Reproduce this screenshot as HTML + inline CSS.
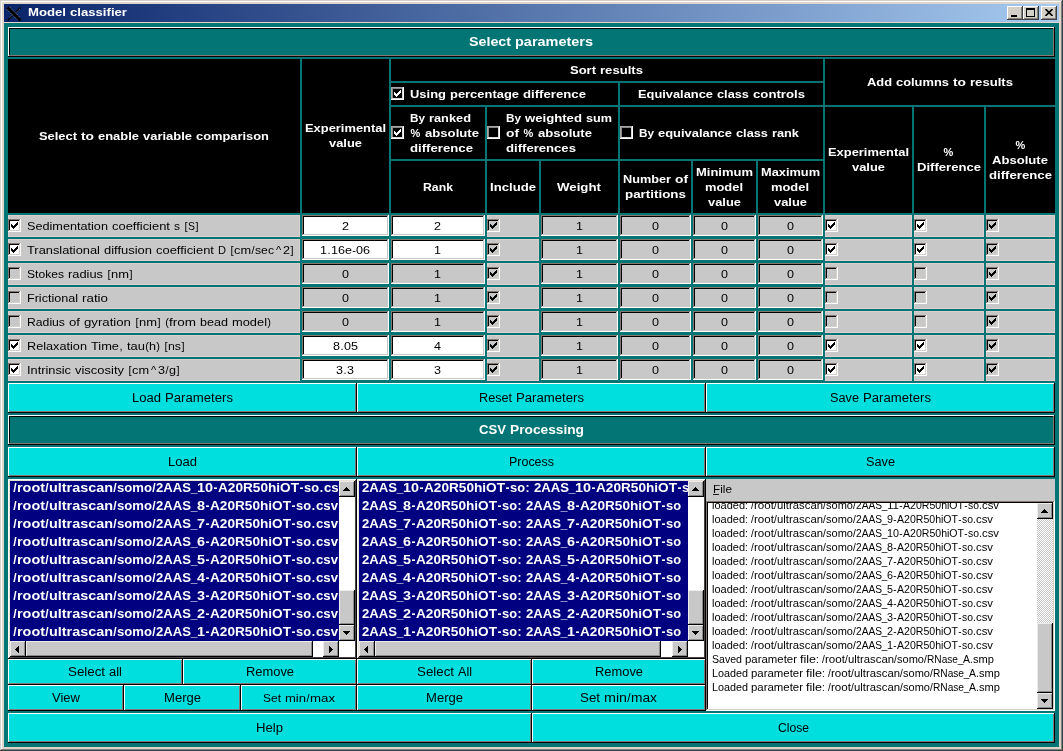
<!DOCTYPE html>
<html><head><meta charset="utf-8"><style>
html,body{margin:0;padding:0;width:1063px;height:751px;overflow:hidden;background:#d4d0c8;}
body{position:relative;font-family:"Liberation Sans",sans-serif;}
.a{position:absolute;box-sizing:border-box;}
.t{position:absolute;white-space:pre;font-family:"Liberation Sans",sans-serif;will-change:transform;}
.t span{position:absolute;top:0;transform-origin:0 0;}
</style></head><body>
<div class="a " style="left:0px;top:0px;width:1063px;height:751px;background:#404040;"></div>
<div class="a " style="left:0px;top:0px;width:1062px;height:750px;background:#d4d0c8;"></div>
<div class="a " style="left:1px;top:1px;width:1061px;height:749px;background:#808080;"></div>
<div class="a " style="left:1px;top:1px;width:1060px;height:748px;background:#fff;"></div>
<div class="a " style="left:2px;top:2px;width:1059px;height:747px;background:#ddd6cd;"></div>
<div class="a " style="left:4px;top:4px;width:1055px;height:18px;background:linear-gradient(to right,#0a246a,#a6caf0);"></div>
<div class="a " style="left:4px;top:23px;width:1055px;height:724px;background:#037575;"></div>
<svg class="a" style="left:6px;top:6px" width="16" height="16"><path d="M1.5,1.5 L14.5,14.5" stroke="#000" stroke-width="3"/><path d="M14.5,1.5 L1.5,14.5" stroke="#000" stroke-width="1.2"/><path d="M1,3.6 L11.4,14 M3.6,1 L14,11.4 M14,2.8 L9.5,7.3 M6.5,8.7 L2.8,12.4" stroke="#c8c0b0" stroke-width="0.7" stroke-dasharray="1 1.6"/></svg>
<div class="t" style="left:28px;top:7px;font-size:11px;line-height:11px;color:#fff;font-weight:bold;"><span style="left:0px;transform:scaleX(1.196)">Model</span><span style="left:42px;transform:scaleX(1.194)">classifier</span></div>
<div class="a " style="left:1007px;top:6px;width:16px;height:14px;background:#d4d0c8;box-shadow:inset -1px -1px 0 #404040,inset 1px 1px 0 #fff,inset -2px -2px 0 #808080,inset 2px 2px 0 #d4d0c8;"></div>
<div class="a " style="left:1023px;top:6px;width:16px;height:14px;background:#d4d0c8;box-shadow:inset -1px -1px 0 #404040,inset 1px 1px 0 #fff,inset -2px -2px 0 #808080,inset 2px 2px 0 #d4d0c8;"></div>
<div class="a " style="left:1041px;top:6px;width:16px;height:14px;background:#d4d0c8;box-shadow:inset -1px -1px 0 #404040,inset 1px 1px 0 #fff,inset -2px -2px 0 #808080,inset 2px 2px 0 #d4d0c8;"></div>
<div class="a " style="left:1011px;top:15px;width:6px;height:2px;background:#000;"></div>
<div class="a " style="left:1026px;top:8px;width:9px;height:9px;border:1px solid #000;border-top-width:2px;box-sizing:border-box;"></div>
<svg class="a" style="left:1045px;top:9px" width="8" height="7"><path d="M0.5,0 L7.5,7 M7.5,0 L0.5,7" stroke="#000" stroke-width="1.6"/></svg>
<div class="a " style="left:8px;top:27px;width:1047px;height:30px;background:#037575;box-shadow:inset -1px -1px 0 #000,inset 1px 1px 0 #fff,inset -2px -2px 0 #857873,inset 2px 2px 0 #000;"></div>
<div class="t" style="left:469px;top:36px;font-size:12px;line-height:12px;color:#fff;font-weight:bold;"><span style="left:0px;transform:scaleX(1.188)">Select</span><span style="left:46px;transform:scaleX(1.206)">parameters</span></div>
<div class="a " style="left:8px;top:59px;width:292px;height:154px;background:#000;"></div>
<div class="t" style="left:39px;top:131px;font-size:11px;line-height:11px;color:#fff;font-weight:bold;"><span style="left:0px;transform:scaleX(1.171)">Select</span><span style="left:42px;transform:scaleX(1.253)">to</span><span style="left:59px;transform:scaleX(1.176)">enable</span><span style="left:104px;transform:scaleX(1.177)">variable</span><span style="left:157px;transform:scaleX(1.170)">comparison</span></div>
<div class="a " style="left:302px;top:59px;width:87px;height:154px;background:#000;"></div>
<div class="t" style="left:305px;top:123px;font-size:11px;line-height:11px;color:#fff;font-weight:bold;"><span style="left:0px;transform:scaleX(1.172)">Experimental</span></div>
<div class="t" style="left:329px;top:138px;font-size:11px;line-height:11px;color:#fff;font-weight:bold;"><span style="left:0px;transform:scaleX(1.172)">value</span></div>
<div class="a " style="left:391px;top:59px;width:432px;height:22px;background:#000;"></div>
<div class="t" style="left:570px;top:65px;font-size:11px;line-height:11px;color:#fff;font-weight:bold;"><span style="left:0px;transform:scaleX(1.182)">Sort</span><span style="left:30px;transform:scaleX(1.191)">results</span></div>
<div class="a " style="left:391px;top:83px;width:227px;height:22px;background:#000;"></div>
<div class="a " style="left:391px;top:87px;width:13px;height:13px;background:#000;box-shadow:inset -1px -1px 0 #fff,inset 1px 1px 0 #a8a8a8,inset -2px -2px 0 #d8d8d8,inset 2px 2px 0 #888888;"></div>
<svg class="a" style="left:391px;top:87px" width="13" height="13" fill="#fff" shape-rendering="crispEdges"><rect x="3" y="5" width="1" height="3"/><rect x="4" y="6" width="1" height="3"/><rect x="5" y="7" width="1" height="3"/><rect x="6" y="6" width="1" height="3"/><rect x="7" y="5" width="1" height="3"/><rect x="8" y="4" width="1" height="3"/><rect x="9" y="3" width="1" height="3"/></svg>
<div class="t" style="left:410px;top:89px;font-size:11px;line-height:11px;color:#fff;font-weight:bold;"><span style="left:0px;transform:scaleX(1.178)">Using</span><span style="left:40px;transform:scaleX(1.175)">percentage</span><span style="left:113px;transform:scaleX(1.198)">difference</span></div>
<div class="a " style="left:620px;top:83px;width:203px;height:22px;background:#000;"></div>
<div class="t" style="left:638px;top:89px;font-size:11px;line-height:11px;color:#fff;font-weight:bold;"><span style="left:0px;transform:scaleX(1.167)">Equivalance</span><span style="left:79px;transform:scaleX(1.161)">class</span><span style="left:115px;transform:scaleX(1.198)">controls</span></div>
<div class="a " style="left:391px;top:107px;width:94px;height:52px;background:#000;"></div>
<div class="a " style="left:391px;top:126px;width:13px;height:13px;background:#000;box-shadow:inset -1px -1px 0 #fff,inset 1px 1px 0 #a8a8a8,inset -2px -2px 0 #d8d8d8,inset 2px 2px 0 #888888;"></div>
<svg class="a" style="left:391px;top:126px" width="13" height="13" fill="#fff" shape-rendering="crispEdges"><rect x="3" y="5" width="1" height="3"/><rect x="4" y="6" width="1" height="3"/><rect x="5" y="7" width="1" height="3"/><rect x="6" y="6" width="1" height="3"/><rect x="7" y="5" width="1" height="3"/><rect x="8" y="4" width="1" height="3"/><rect x="9" y="3" width="1" height="3"/></svg>
<div class="t" style="left:410px;top:113px;font-size:11px;line-height:11px;color:#fff;font-weight:bold;"><span style="left:0px;transform:scaleX(1.067)">By</span><span style="left:19px;transform:scaleX(1.164)">ranked</span></div>
<div class="t" style="left:410px;top:128px;font-size:11px;line-height:11px;color:#fff;font-weight:bold;"><span style="left:0.61px">%</span><span style="left:15px;transform:scaleX(1.193)">absolute</span></div>
<div class="t" style="left:410px;top:143px;font-size:11px;line-height:11px;color:#fff;font-weight:bold;"><span style="left:0px;transform:scaleX(1.198)">difference</span></div>
<div class="a " style="left:487px;top:107px;width:131px;height:52px;background:#000;"></div>
<div class="a " style="left:487px;top:126px;width:13px;height:13px;background:#000;box-shadow:inset -1px -1px 0 #fff,inset 1px 1px 0 #a8a8a8,inset -2px -2px 0 #d8d8d8,inset 2px 2px 0 #888888;"></div>
<div class="t" style="left:506px;top:113px;font-size:11px;line-height:11px;color:#fff;font-weight:bold;"><span style="left:0px;transform:scaleX(1.067)">By</span><span style="left:19px;transform:scaleX(1.195)">weighted</span><span style="left:80px;transform:scaleX(1.149)">sum</span></div>
<div class="t" style="left:506px;top:128px;font-size:11px;line-height:11px;color:#fff;font-weight:bold;"><span style="left:0px;transform:scaleX(1.253)">of</span><span style="left:17.61px">%</span><span style="left:32px;transform:scaleX(1.193)">absolute</span></div>
<div class="t" style="left:506px;top:143px;font-size:11px;line-height:11px;color:#fff;font-weight:bold;"><span style="left:0px;transform:scaleX(1.192)">differences</span></div>
<div class="a " style="left:620px;top:107px;width:203px;height:52px;background:#000;"></div>
<div class="a " style="left:620px;top:126px;width:13px;height:13px;background:#000;box-shadow:inset -1px -1px 0 #fff,inset 1px 1px 0 #a8a8a8,inset -2px -2px 0 #d8d8d8,inset 2px 2px 0 #888888;"></div>
<div class="t" style="left:639px;top:128px;font-size:11px;line-height:11px;color:#fff;font-weight:bold;"><span style="left:0px;transform:scaleX(1.067)">By</span><span style="left:19px;transform:scaleX(1.174)">equivalance</span><span style="left:97px;transform:scaleX(1.161)">class</span><span style="left:133px;transform:scaleX(1.161)">rank</span></div>
<div class="a " style="left:391px;top:161px;width:94px;height:52px;background:#000;"></div>
<div class="t" style="left:423px;top:182px;font-size:11px;line-height:11px;color:#fff;font-weight:bold;"><span style="left:0px;transform:scaleX(1.115)">Rank</span></div>
<div class="a " style="left:487px;top:161px;width:52px;height:52px;background:#000;"></div>
<div class="t" style="left:490px;top:182px;font-size:11px;line-height:11px;color:#fff;font-weight:bold;"><span style="left:0px;transform:scaleX(1.194)">Include</span></div>
<div class="a " style="left:541px;top:161px;width:77px;height:52px;background:#000;"></div>
<div class="t" style="left:557px;top:182px;font-size:11px;line-height:11px;color:#fff;font-weight:bold;"><span style="left:0px;transform:scaleX(1.207)">Weight</span></div>
<div class="a " style="left:620px;top:161px;width:71px;height:52px;background:#000;"></div>
<div class="t" style="left:623px;top:174px;font-size:11px;line-height:11px;color:#fff;font-weight:bold;"><span style="left:0px;transform:scaleX(1.155)">Number</span><span style="left:52px;transform:scaleX(1.253)">of</span></div>
<div class="t" style="left:625px;top:189px;font-size:11px;line-height:11px;color:#fff;font-weight:bold;"><span style="left:0px;transform:scaleX(1.217)">partitions</span></div>
<div class="a " style="left:693px;top:161px;width:63px;height:52px;background:#000;"></div>
<div class="t" style="left:696px;top:167px;font-size:11px;line-height:11px;color:#fff;font-weight:bold;"><span style="left:0px;transform:scaleX(1.181)">Minimum</span></div>
<div class="t" style="left:705px;top:182px;font-size:11px;line-height:11px;color:#fff;font-weight:bold;"><span style="left:0px;transform:scaleX(1.173)">model</span></div>
<div class="t" style="left:708px;top:197px;font-size:11px;line-height:11px;color:#fff;font-weight:bold;"><span style="left:0px;transform:scaleX(1.172)">value</span></div>
<div class="a " style="left:758px;top:161px;width:65px;height:52px;background:#000;"></div>
<div class="t" style="left:761px;top:167px;font-size:11px;line-height:11px;color:#fff;font-weight:bold;"><span style="left:0px;transform:scaleX(1.163)">Maximum</span></div>
<div class="t" style="left:771px;top:182px;font-size:11px;line-height:11px;color:#fff;font-weight:bold;"><span style="left:0px;transform:scaleX(1.173)">model</span></div>
<div class="t" style="left:774px;top:197px;font-size:11px;line-height:11px;color:#fff;font-weight:bold;"><span style="left:0px;transform:scaleX(1.172)">value</span></div>
<div class="a " style="left:825px;top:59px;width:230px;height:46px;background:#000;"></div>
<div class="t" style="left:867px;top:77px;font-size:11px;line-height:11px;color:#fff;font-weight:bold;"><span style="left:0px;transform:scaleX(1.170)">Add</span><span style="left:29px;transform:scaleX(1.171)">columns</span><span style="left:86px;transform:scaleX(1.253)">to</span><span style="left:103px;transform:scaleX(1.191)">results</span></div>
<div class="a " style="left:825px;top:107px;width:87px;height:106px;background:#000;"></div>
<div class="t" style="left:828px;top:147px;font-size:11px;line-height:11px;color:#fff;font-weight:bold;"><span style="left:0px;transform:scaleX(1.172)">Experimental</span></div>
<div class="t" style="left:852px;top:162px;font-size:11px;line-height:11px;color:#fff;font-weight:bold;"><span style="left:0px;transform:scaleX(1.172)">value</span></div>
<div class="a " style="left:914px;top:107px;width:70px;height:106px;background:#000;"></div>
<div class="t" style="left:943px;top:147px;font-size:11px;line-height:11px;color:#fff;font-weight:bold;"><span style="left:0.61px">%</span></div>
<div class="t" style="left:917px;top:162px;font-size:11px;line-height:11px;color:#fff;font-weight:bold;"><span style="left:0px;transform:scaleX(1.189)">Difference</span></div>
<div class="a " style="left:986px;top:107px;width:69px;height:106px;background:#000;"></div>
<div class="t" style="left:1015px;top:140px;font-size:11px;line-height:11px;color:#fff;font-weight:bold;"><span style="left:0.61px">%</span></div>
<div class="t" style="left:992px;top:155px;font-size:11px;line-height:11px;color:#fff;font-weight:bold;"><span style="left:0px;transform:scaleX(1.190)">Absolute</span></div>
<div class="t" style="left:989px;top:170px;font-size:11px;line-height:11px;color:#fff;font-weight:bold;"><span style="left:0px;transform:scaleX(1.198)">difference</span></div>
<div class="a " style="left:8px;top:215px;width:292px;height:22px;background:#c8c8c8;border:1px solid #dccfcf;box-sizing:border-box;"></div>
<div class="a " style="left:8px;top:219px;width:13px;height:13px;background:#fff;box-shadow:inset -1px -1px 0 #fff,inset 1px 1px 0 #857873,inset -2px -2px 0 #d4d0c8,inset 2px 2px 0 #000;"></div>
<svg class="a" style="left:8px;top:219px" width="13" height="13" fill="#000" shape-rendering="crispEdges"><rect x="3" y="5" width="1" height="3"/><rect x="4" y="6" width="1" height="3"/><rect x="5" y="7" width="1" height="3"/><rect x="6" y="6" width="1" height="3"/><rect x="7" y="5" width="1" height="3"/><rect x="8" y="4" width="1" height="3"/><rect x="9" y="3" width="1" height="3"/></svg>
<div class="t" style="left:27px;top:221px;font-size:11px;line-height:11px;color:#000;"><span style="left:0px;transform:scaleX(1.151)">Sedimentation</span><span style="left:85px;transform:scaleX(1.175)">coefficient</span><span style="left:147px;transform:scaleX(1.091)">s</span><span style="left:157.47px">[</span><span style="left:161px;transform:scaleX(0.953)">S</span><span style="left:168.47px">]</span></div>
<div class="a " style="left:302px;top:215px;width:87px;height:21px;background:#fff;box-shadow:inset -1px -1px 0 #fff,inset 1px 1px 0 #857873,inset -2px -2px 0 #c8c8c8,inset 2px 2px 0 #000;"></div>
<div class="t" style="left:342px;top:221px;font-size:11px;line-height:11px;color:#000;"><span style="left:0px;transform:scaleX(1.143)">2</span></div>
<div class="a " style="left:391px;top:215px;width:94px;height:21px;background:#fff;box-shadow:inset -1px -1px 0 #fff,inset 1px 1px 0 #857873,inset -2px -2px 0 #c8c8c8,inset 2px 2px 0 #000;"></div>
<div class="t" style="left:434px;top:221px;font-size:11px;line-height:11px;color:#000;"><span style="left:0px;transform:scaleX(1.143)">2</span></div>
<div class="a " style="left:487px;top:215px;width:52px;height:22px;background:#c8c8c8;border:1px solid #dccfcf;box-sizing:border-box;"></div>
<div class="a " style="left:487px;top:219px;width:13px;height:13px;background:#c8c8c8;box-shadow:inset -1px -1px 0 #fff,inset 1px 1px 0 #857873,inset -2px -2px 0 #d4d0c8,inset 2px 2px 0 #000;"></div>
<svg class="a" style="left:487px;top:219px" width="13" height="13" fill="#000" shape-rendering="crispEdges"><rect x="3" y="5" width="1" height="3"/><rect x="4" y="6" width="1" height="3"/><rect x="5" y="7" width="1" height="3"/><rect x="6" y="6" width="1" height="3"/><rect x="7" y="5" width="1" height="3"/><rect x="8" y="4" width="1" height="3"/><rect x="9" y="3" width="1" height="3"/></svg>
<div class="a " style="left:541px;top:215px;width:77px;height:21px;background:#c8c8c8;box-shadow:inset -1px -1px 0 #fff,inset 1px 1px 0 #857873,inset -2px -2px 0 #c8c8c8,inset 2px 2px 0 #000;"></div>
<div class="t" style="left:576px;top:221px;font-size:11px;line-height:11px;color:#000;"><span style="left:0px;transform:scaleX(1.143)">1</span></div>
<div class="a " style="left:620px;top:215px;width:71px;height:21px;background:#c8c8c8;box-shadow:inset -1px -1px 0 #fff,inset 1px 1px 0 #857873,inset -2px -2px 0 #c8c8c8,inset 2px 2px 0 #000;"></div>
<div class="t" style="left:652px;top:221px;font-size:11px;line-height:11px;color:#000;"><span style="left:0px;transform:scaleX(1.143)">0</span></div>
<div class="a " style="left:693px;top:215px;width:63px;height:21px;background:#c8c8c8;box-shadow:inset -1px -1px 0 #fff,inset 1px 1px 0 #857873,inset -2px -2px 0 #c8c8c8,inset 2px 2px 0 #000;"></div>
<div class="t" style="left:721px;top:221px;font-size:11px;line-height:11px;color:#000;"><span style="left:0px;transform:scaleX(1.143)">0</span></div>
<div class="a " style="left:758px;top:215px;width:65px;height:21px;background:#c8c8c8;box-shadow:inset -1px -1px 0 #fff,inset 1px 1px 0 #857873,inset -2px -2px 0 #c8c8c8,inset 2px 2px 0 #000;"></div>
<div class="t" style="left:787px;top:221px;font-size:11px;line-height:11px;color:#000;"><span style="left:0px;transform:scaleX(1.143)">0</span></div>
<div class="a " style="left:825px;top:215px;width:87px;height:22px;background:#c8c8c8;border:1px solid #dccfcf;box-sizing:border-box;"></div>
<div class="a " style="left:825px;top:219px;width:13px;height:13px;background:#fff;box-shadow:inset -1px -1px 0 #fff,inset 1px 1px 0 #857873,inset -2px -2px 0 #d4d0c8,inset 2px 2px 0 #000;"></div>
<svg class="a" style="left:825px;top:219px" width="13" height="13" fill="#000" shape-rendering="crispEdges"><rect x="3" y="5" width="1" height="3"/><rect x="4" y="6" width="1" height="3"/><rect x="5" y="7" width="1" height="3"/><rect x="6" y="6" width="1" height="3"/><rect x="7" y="5" width="1" height="3"/><rect x="8" y="4" width="1" height="3"/><rect x="9" y="3" width="1" height="3"/></svg>
<div class="a " style="left:914px;top:215px;width:70px;height:22px;background:#c8c8c8;border:1px solid #dccfcf;box-sizing:border-box;"></div>
<div class="a " style="left:914px;top:219px;width:13px;height:13px;background:#fff;box-shadow:inset -1px -1px 0 #fff,inset 1px 1px 0 #857873,inset -2px -2px 0 #d4d0c8,inset 2px 2px 0 #000;"></div>
<svg class="a" style="left:914px;top:219px" width="13" height="13" fill="#000" shape-rendering="crispEdges"><rect x="3" y="5" width="1" height="3"/><rect x="4" y="6" width="1" height="3"/><rect x="5" y="7" width="1" height="3"/><rect x="6" y="6" width="1" height="3"/><rect x="7" y="5" width="1" height="3"/><rect x="8" y="4" width="1" height="3"/><rect x="9" y="3" width="1" height="3"/></svg>
<div class="a " style="left:986px;top:215px;width:69px;height:22px;background:#c8c8c8;border:1px solid #dccfcf;box-sizing:border-box;"></div>
<div class="a " style="left:986px;top:219px;width:13px;height:13px;background:#c8c8c8;box-shadow:inset -1px -1px 0 #fff,inset 1px 1px 0 #857873,inset -2px -2px 0 #d4d0c8,inset 2px 2px 0 #000;"></div>
<svg class="a" style="left:986px;top:219px" width="13" height="13" fill="#000" shape-rendering="crispEdges"><rect x="3" y="5" width="1" height="3"/><rect x="4" y="6" width="1" height="3"/><rect x="5" y="7" width="1" height="3"/><rect x="6" y="6" width="1" height="3"/><rect x="7" y="5" width="1" height="3"/><rect x="8" y="4" width="1" height="3"/><rect x="9" y="3" width="1" height="3"/></svg>
<div class="a " style="left:8px;top:239px;width:292px;height:22px;background:#c8c8c8;border:1px solid #dccfcf;box-sizing:border-box;"></div>
<div class="a " style="left:8px;top:243px;width:13px;height:13px;background:#fff;box-shadow:inset -1px -1px 0 #fff,inset 1px 1px 0 #857873,inset -2px -2px 0 #d4d0c8,inset 2px 2px 0 #000;"></div>
<svg class="a" style="left:8px;top:243px" width="13" height="13" fill="#000" shape-rendering="crispEdges"><rect x="3" y="5" width="1" height="3"/><rect x="4" y="6" width="1" height="3"/><rect x="5" y="7" width="1" height="3"/><rect x="6" y="6" width="1" height="3"/><rect x="7" y="5" width="1" height="3"/><rect x="8" y="4" width="1" height="3"/><rect x="9" y="3" width="1" height="3"/></svg>
<div class="t" style="left:27px;top:245px;font-size:11px;line-height:11px;color:#000;"><span style="left:0px;transform:scaleX(1.166)">Translational</span><span style="left:77px;transform:scaleX(1.177)">diffusion</span><span style="left:129px;transform:scaleX(1.175)">coefficient</span><span style="left:191px;transform:scaleX(1.008)">D</span><span style="left:203.47px">[</span><span style="left:207px;transform:scaleX(1.160)">cm</span><span style="left:224.47px">/</span><span style="left:228px;transform:scaleX(1.109)">sec</span><span style="left:248.92px">^</span><span style="left:256px;transform:scaleX(1.143)">2</span><span style="left:263.47px">]</span></div>
<div class="a " style="left:302px;top:239px;width:87px;height:21px;background:#fff;box-shadow:inset -1px -1px 0 #fff,inset 1px 1px 0 #857873,inset -2px -2px 0 #c8c8c8,inset 2px 2px 0 #000;"></div>
<div class="t" style="left:320px;top:245px;font-size:11px;line-height:11px;color:#000;"><span style="left:0px;transform:scaleX(1.143)">1</span><span style="left:7.47px">.</span><span style="left:11px;transform:scaleX(1.143)">16e</span><span style="left:32.17px">-</span><span style="left:36px;transform:scaleX(1.143)">06</span></div>
<div class="a " style="left:391px;top:239px;width:94px;height:21px;background:#fff;box-shadow:inset -1px -1px 0 #fff,inset 1px 1px 0 #857873,inset -2px -2px 0 #c8c8c8,inset 2px 2px 0 #000;"></div>
<div class="t" style="left:434px;top:245px;font-size:11px;line-height:11px;color:#000;"><span style="left:0px;transform:scaleX(1.143)">1</span></div>
<div class="a " style="left:487px;top:239px;width:52px;height:22px;background:#c8c8c8;border:1px solid #dccfcf;box-sizing:border-box;"></div>
<div class="a " style="left:487px;top:243px;width:13px;height:13px;background:#c8c8c8;box-shadow:inset -1px -1px 0 #fff,inset 1px 1px 0 #857873,inset -2px -2px 0 #d4d0c8,inset 2px 2px 0 #000;"></div>
<svg class="a" style="left:487px;top:243px" width="13" height="13" fill="#000" shape-rendering="crispEdges"><rect x="3" y="5" width="1" height="3"/><rect x="4" y="6" width="1" height="3"/><rect x="5" y="7" width="1" height="3"/><rect x="6" y="6" width="1" height="3"/><rect x="7" y="5" width="1" height="3"/><rect x="8" y="4" width="1" height="3"/><rect x="9" y="3" width="1" height="3"/></svg>
<div class="a " style="left:541px;top:239px;width:77px;height:21px;background:#c8c8c8;box-shadow:inset -1px -1px 0 #fff,inset 1px 1px 0 #857873,inset -2px -2px 0 #c8c8c8,inset 2px 2px 0 #000;"></div>
<div class="t" style="left:576px;top:245px;font-size:11px;line-height:11px;color:#000;"><span style="left:0px;transform:scaleX(1.143)">1</span></div>
<div class="a " style="left:620px;top:239px;width:71px;height:21px;background:#c8c8c8;box-shadow:inset -1px -1px 0 #fff,inset 1px 1px 0 #857873,inset -2px -2px 0 #c8c8c8,inset 2px 2px 0 #000;"></div>
<div class="t" style="left:652px;top:245px;font-size:11px;line-height:11px;color:#000;"><span style="left:0px;transform:scaleX(1.143)">0</span></div>
<div class="a " style="left:693px;top:239px;width:63px;height:21px;background:#c8c8c8;box-shadow:inset -1px -1px 0 #fff,inset 1px 1px 0 #857873,inset -2px -2px 0 #c8c8c8,inset 2px 2px 0 #000;"></div>
<div class="t" style="left:721px;top:245px;font-size:11px;line-height:11px;color:#000;"><span style="left:0px;transform:scaleX(1.143)">0</span></div>
<div class="a " style="left:758px;top:239px;width:65px;height:21px;background:#c8c8c8;box-shadow:inset -1px -1px 0 #fff,inset 1px 1px 0 #857873,inset -2px -2px 0 #c8c8c8,inset 2px 2px 0 #000;"></div>
<div class="t" style="left:787px;top:245px;font-size:11px;line-height:11px;color:#000;"><span style="left:0px;transform:scaleX(1.143)">0</span></div>
<div class="a " style="left:825px;top:239px;width:87px;height:22px;background:#c8c8c8;border:1px solid #dccfcf;box-sizing:border-box;"></div>
<div class="a " style="left:825px;top:243px;width:13px;height:13px;background:#fff;box-shadow:inset -1px -1px 0 #fff,inset 1px 1px 0 #857873,inset -2px -2px 0 #d4d0c8,inset 2px 2px 0 #000;"></div>
<svg class="a" style="left:825px;top:243px" width="13" height="13" fill="#000" shape-rendering="crispEdges"><rect x="3" y="5" width="1" height="3"/><rect x="4" y="6" width="1" height="3"/><rect x="5" y="7" width="1" height="3"/><rect x="6" y="6" width="1" height="3"/><rect x="7" y="5" width="1" height="3"/><rect x="8" y="4" width="1" height="3"/><rect x="9" y="3" width="1" height="3"/></svg>
<div class="a " style="left:914px;top:239px;width:70px;height:22px;background:#c8c8c8;border:1px solid #dccfcf;box-sizing:border-box;"></div>
<div class="a " style="left:914px;top:243px;width:13px;height:13px;background:#fff;box-shadow:inset -1px -1px 0 #fff,inset 1px 1px 0 #857873,inset -2px -2px 0 #d4d0c8,inset 2px 2px 0 #000;"></div>
<svg class="a" style="left:914px;top:243px" width="13" height="13" fill="#000" shape-rendering="crispEdges"><rect x="3" y="5" width="1" height="3"/><rect x="4" y="6" width="1" height="3"/><rect x="5" y="7" width="1" height="3"/><rect x="6" y="6" width="1" height="3"/><rect x="7" y="5" width="1" height="3"/><rect x="8" y="4" width="1" height="3"/><rect x="9" y="3" width="1" height="3"/></svg>
<div class="a " style="left:986px;top:239px;width:69px;height:22px;background:#c8c8c8;border:1px solid #dccfcf;box-sizing:border-box;"></div>
<div class="a " style="left:986px;top:243px;width:13px;height:13px;background:#c8c8c8;box-shadow:inset -1px -1px 0 #fff,inset 1px 1px 0 #857873,inset -2px -2px 0 #d4d0c8,inset 2px 2px 0 #000;"></div>
<svg class="a" style="left:986px;top:243px" width="13" height="13" fill="#000" shape-rendering="crispEdges"><rect x="3" y="5" width="1" height="3"/><rect x="4" y="6" width="1" height="3"/><rect x="5" y="7" width="1" height="3"/><rect x="6" y="6" width="1" height="3"/><rect x="7" y="5" width="1" height="3"/><rect x="8" y="4" width="1" height="3"/><rect x="9" y="3" width="1" height="3"/></svg>
<div class="a " style="left:8px;top:263px;width:292px;height:22px;background:#c8c8c8;border:1px solid #dccfcf;box-sizing:border-box;"></div>
<div class="a " style="left:8px;top:267px;width:13px;height:13px;background:#c8c8c8;box-shadow:inset -1px -1px 0 #fff,inset 1px 1px 0 #857873,inset -2px -2px 0 #d4d0c8,inset 2px 2px 0 #000;"></div>
<div class="t" style="left:27px;top:269px;font-size:11px;line-height:11px;color:#000;"><span style="left:0px;transform:scaleX(1.099)">Stokes</span><span style="left:41px;transform:scaleX(1.168)">radius</span><span style="left:80.47px">[</span><span style="left:84px;transform:scaleX(1.178)">nm</span><span style="left:102.47px">]</span></div>
<div class="a " style="left:302px;top:263px;width:87px;height:21px;background:#c8c8c8;box-shadow:inset -1px -1px 0 #fff,inset 1px 1px 0 #857873,inset -2px -2px 0 #c8c8c8,inset 2px 2px 0 #000;"></div>
<div class="t" style="left:342px;top:269px;font-size:11px;line-height:11px;color:#000;"><span style="left:0px;transform:scaleX(1.143)">0</span></div>
<div class="a " style="left:391px;top:263px;width:94px;height:21px;background:#c8c8c8;box-shadow:inset -1px -1px 0 #fff,inset 1px 1px 0 #857873,inset -2px -2px 0 #c8c8c8,inset 2px 2px 0 #000;"></div>
<div class="t" style="left:434px;top:269px;font-size:11px;line-height:11px;color:#000;"><span style="left:0px;transform:scaleX(1.143)">1</span></div>
<div class="a " style="left:487px;top:263px;width:52px;height:22px;background:#c8c8c8;border:1px solid #dccfcf;box-sizing:border-box;"></div>
<div class="a " style="left:487px;top:267px;width:13px;height:13px;background:#c8c8c8;box-shadow:inset -1px -1px 0 #fff,inset 1px 1px 0 #857873,inset -2px -2px 0 #d4d0c8,inset 2px 2px 0 #000;"></div>
<svg class="a" style="left:487px;top:267px" width="13" height="13" fill="#000" shape-rendering="crispEdges"><rect x="3" y="5" width="1" height="3"/><rect x="4" y="6" width="1" height="3"/><rect x="5" y="7" width="1" height="3"/><rect x="6" y="6" width="1" height="3"/><rect x="7" y="5" width="1" height="3"/><rect x="8" y="4" width="1" height="3"/><rect x="9" y="3" width="1" height="3"/></svg>
<div class="a " style="left:541px;top:263px;width:77px;height:21px;background:#c8c8c8;box-shadow:inset -1px -1px 0 #fff,inset 1px 1px 0 #857873,inset -2px -2px 0 #c8c8c8,inset 2px 2px 0 #000;"></div>
<div class="t" style="left:576px;top:269px;font-size:11px;line-height:11px;color:#000;"><span style="left:0px;transform:scaleX(1.143)">1</span></div>
<div class="a " style="left:620px;top:263px;width:71px;height:21px;background:#c8c8c8;box-shadow:inset -1px -1px 0 #fff,inset 1px 1px 0 #857873,inset -2px -2px 0 #c8c8c8,inset 2px 2px 0 #000;"></div>
<div class="t" style="left:652px;top:269px;font-size:11px;line-height:11px;color:#000;"><span style="left:0px;transform:scaleX(1.143)">0</span></div>
<div class="a " style="left:693px;top:263px;width:63px;height:21px;background:#c8c8c8;box-shadow:inset -1px -1px 0 #fff,inset 1px 1px 0 #857873,inset -2px -2px 0 #c8c8c8,inset 2px 2px 0 #000;"></div>
<div class="t" style="left:721px;top:269px;font-size:11px;line-height:11px;color:#000;"><span style="left:0px;transform:scaleX(1.143)">0</span></div>
<div class="a " style="left:758px;top:263px;width:65px;height:21px;background:#c8c8c8;box-shadow:inset -1px -1px 0 #fff,inset 1px 1px 0 #857873,inset -2px -2px 0 #c8c8c8,inset 2px 2px 0 #000;"></div>
<div class="t" style="left:787px;top:269px;font-size:11px;line-height:11px;color:#000;"><span style="left:0px;transform:scaleX(1.143)">0</span></div>
<div class="a " style="left:825px;top:263px;width:87px;height:22px;background:#c8c8c8;border:1px solid #dccfcf;box-sizing:border-box;"></div>
<div class="a " style="left:825px;top:267px;width:13px;height:13px;background:#c8c8c8;box-shadow:inset -1px -1px 0 #fff,inset 1px 1px 0 #857873,inset -2px -2px 0 #d4d0c8,inset 2px 2px 0 #000;"></div>
<div class="a " style="left:914px;top:263px;width:70px;height:22px;background:#c8c8c8;border:1px solid #dccfcf;box-sizing:border-box;"></div>
<div class="a " style="left:914px;top:267px;width:13px;height:13px;background:#c8c8c8;box-shadow:inset -1px -1px 0 #fff,inset 1px 1px 0 #857873,inset -2px -2px 0 #d4d0c8,inset 2px 2px 0 #000;"></div>
<div class="a " style="left:986px;top:263px;width:69px;height:22px;background:#c8c8c8;border:1px solid #dccfcf;box-sizing:border-box;"></div>
<div class="a " style="left:986px;top:267px;width:13px;height:13px;background:#c8c8c8;box-shadow:inset -1px -1px 0 #fff,inset 1px 1px 0 #857873,inset -2px -2px 0 #d4d0c8,inset 2px 2px 0 #000;"></div>
<svg class="a" style="left:986px;top:267px" width="13" height="13" fill="#000" shape-rendering="crispEdges"><rect x="3" y="5" width="1" height="3"/><rect x="4" y="6" width="1" height="3"/><rect x="5" y="7" width="1" height="3"/><rect x="6" y="6" width="1" height="3"/><rect x="7" y="5" width="1" height="3"/><rect x="8" y="4" width="1" height="3"/><rect x="9" y="3" width="1" height="3"/></svg>
<div class="a " style="left:8px;top:287px;width:292px;height:22px;background:#c8c8c8;border:1px solid #dccfcf;box-sizing:border-box;"></div>
<div class="a " style="left:8px;top:291px;width:13px;height:13px;background:#c8c8c8;box-shadow:inset -1px -1px 0 #fff,inset 1px 1px 0 #857873,inset -2px -2px 0 #d4d0c8,inset 2px 2px 0 #000;"></div>
<div class="t" style="left:27px;top:293px;font-size:11px;line-height:11px;color:#000;"><span style="left:0px;transform:scaleX(1.143)">Frictional</span><span style="left:55px;transform:scaleX(1.215)">ratio</span></div>
<div class="a " style="left:302px;top:287px;width:87px;height:21px;background:#c8c8c8;box-shadow:inset -1px -1px 0 #fff,inset 1px 1px 0 #857873,inset -2px -2px 0 #c8c8c8,inset 2px 2px 0 #000;"></div>
<div class="t" style="left:342px;top:293px;font-size:11px;line-height:11px;color:#000;"><span style="left:0px;transform:scaleX(1.143)">0</span></div>
<div class="a " style="left:391px;top:287px;width:94px;height:21px;background:#c8c8c8;box-shadow:inset -1px -1px 0 #fff,inset 1px 1px 0 #857873,inset -2px -2px 0 #c8c8c8,inset 2px 2px 0 #000;"></div>
<div class="t" style="left:434px;top:293px;font-size:11px;line-height:11px;color:#000;"><span style="left:0px;transform:scaleX(1.143)">1</span></div>
<div class="a " style="left:487px;top:287px;width:52px;height:22px;background:#c8c8c8;border:1px solid #dccfcf;box-sizing:border-box;"></div>
<div class="a " style="left:487px;top:291px;width:13px;height:13px;background:#c8c8c8;box-shadow:inset -1px -1px 0 #fff,inset 1px 1px 0 #857873,inset -2px -2px 0 #d4d0c8,inset 2px 2px 0 #000;"></div>
<svg class="a" style="left:487px;top:291px" width="13" height="13" fill="#000" shape-rendering="crispEdges"><rect x="3" y="5" width="1" height="3"/><rect x="4" y="6" width="1" height="3"/><rect x="5" y="7" width="1" height="3"/><rect x="6" y="6" width="1" height="3"/><rect x="7" y="5" width="1" height="3"/><rect x="8" y="4" width="1" height="3"/><rect x="9" y="3" width="1" height="3"/></svg>
<div class="a " style="left:541px;top:287px;width:77px;height:21px;background:#c8c8c8;box-shadow:inset -1px -1px 0 #fff,inset 1px 1px 0 #857873,inset -2px -2px 0 #c8c8c8,inset 2px 2px 0 #000;"></div>
<div class="t" style="left:576px;top:293px;font-size:11px;line-height:11px;color:#000;"><span style="left:0px;transform:scaleX(1.143)">1</span></div>
<div class="a " style="left:620px;top:287px;width:71px;height:21px;background:#c8c8c8;box-shadow:inset -1px -1px 0 #fff,inset 1px 1px 0 #857873,inset -2px -2px 0 #c8c8c8,inset 2px 2px 0 #000;"></div>
<div class="t" style="left:652px;top:293px;font-size:11px;line-height:11px;color:#000;"><span style="left:0px;transform:scaleX(1.143)">0</span></div>
<div class="a " style="left:693px;top:287px;width:63px;height:21px;background:#c8c8c8;box-shadow:inset -1px -1px 0 #fff,inset 1px 1px 0 #857873,inset -2px -2px 0 #c8c8c8,inset 2px 2px 0 #000;"></div>
<div class="t" style="left:721px;top:293px;font-size:11px;line-height:11px;color:#000;"><span style="left:0px;transform:scaleX(1.143)">0</span></div>
<div class="a " style="left:758px;top:287px;width:65px;height:21px;background:#c8c8c8;box-shadow:inset -1px -1px 0 #fff,inset 1px 1px 0 #857873,inset -2px -2px 0 #c8c8c8,inset 2px 2px 0 #000;"></div>
<div class="t" style="left:787px;top:293px;font-size:11px;line-height:11px;color:#000;"><span style="left:0px;transform:scaleX(1.143)">0</span></div>
<div class="a " style="left:825px;top:287px;width:87px;height:22px;background:#c8c8c8;border:1px solid #dccfcf;box-sizing:border-box;"></div>
<div class="a " style="left:825px;top:291px;width:13px;height:13px;background:#c8c8c8;box-shadow:inset -1px -1px 0 #fff,inset 1px 1px 0 #857873,inset -2px -2px 0 #d4d0c8,inset 2px 2px 0 #000;"></div>
<div class="a " style="left:914px;top:287px;width:70px;height:22px;background:#c8c8c8;border:1px solid #dccfcf;box-sizing:border-box;"></div>
<div class="a " style="left:914px;top:291px;width:13px;height:13px;background:#c8c8c8;box-shadow:inset -1px -1px 0 #fff,inset 1px 1px 0 #857873,inset -2px -2px 0 #d4d0c8,inset 2px 2px 0 #000;"></div>
<div class="a " style="left:986px;top:287px;width:69px;height:22px;background:#c8c8c8;border:1px solid #dccfcf;box-sizing:border-box;"></div>
<div class="a " style="left:986px;top:291px;width:13px;height:13px;background:#c8c8c8;box-shadow:inset -1px -1px 0 #fff,inset 1px 1px 0 #857873,inset -2px -2px 0 #d4d0c8,inset 2px 2px 0 #000;"></div>
<svg class="a" style="left:986px;top:291px" width="13" height="13" fill="#000" shape-rendering="crispEdges"><rect x="3" y="5" width="1" height="3"/><rect x="4" y="6" width="1" height="3"/><rect x="5" y="7" width="1" height="3"/><rect x="6" y="6" width="1" height="3"/><rect x="7" y="5" width="1" height="3"/><rect x="8" y="4" width="1" height="3"/><rect x="9" y="3" width="1" height="3"/></svg>
<div class="a " style="left:8px;top:311px;width:292px;height:22px;background:#c8c8c8;border:1px solid #dccfcf;box-sizing:border-box;"></div>
<div class="a " style="left:8px;top:315px;width:13px;height:13px;background:#c8c8c8;box-shadow:inset -1px -1px 0 #fff,inset 1px 1px 0 #857873,inset -2px -2px 0 #d4d0c8,inset 2px 2px 0 #000;"></div>
<div class="t" style="left:27px;top:317px;font-size:11px;line-height:11px;color:#000;"><span style="left:0px;transform:scaleX(1.109)">Radius</span><span style="left:42px;transform:scaleX(1.197)">of</span><span style="left:57px;transform:scaleX(1.200)">gyration</span><span style="left:108.47px">[</span><span style="left:112px;transform:scaleX(1.178)">nm</span><span style="left:130.47px">]</span><span style="left:138.17px">(</span><span style="left:142px;transform:scaleX(1.227)">from</span><span style="left:173px;transform:scaleX(1.143)">bead</span><span style="left:205px;transform:scaleX(1.168)">model</span><span style="left:240.17px">)</span></div>
<div class="a " style="left:302px;top:311px;width:87px;height:21px;background:#c8c8c8;box-shadow:inset -1px -1px 0 #fff,inset 1px 1px 0 #857873,inset -2px -2px 0 #c8c8c8,inset 2px 2px 0 #000;"></div>
<div class="t" style="left:342px;top:317px;font-size:11px;line-height:11px;color:#000;"><span style="left:0px;transform:scaleX(1.143)">0</span></div>
<div class="a " style="left:391px;top:311px;width:94px;height:21px;background:#c8c8c8;box-shadow:inset -1px -1px 0 #fff,inset 1px 1px 0 #857873,inset -2px -2px 0 #c8c8c8,inset 2px 2px 0 #000;"></div>
<div class="t" style="left:434px;top:317px;font-size:11px;line-height:11px;color:#000;"><span style="left:0px;transform:scaleX(1.143)">1</span></div>
<div class="a " style="left:487px;top:311px;width:52px;height:22px;background:#c8c8c8;border:1px solid #dccfcf;box-sizing:border-box;"></div>
<div class="a " style="left:487px;top:315px;width:13px;height:13px;background:#c8c8c8;box-shadow:inset -1px -1px 0 #fff,inset 1px 1px 0 #857873,inset -2px -2px 0 #d4d0c8,inset 2px 2px 0 #000;"></div>
<svg class="a" style="left:487px;top:315px" width="13" height="13" fill="#000" shape-rendering="crispEdges"><rect x="3" y="5" width="1" height="3"/><rect x="4" y="6" width="1" height="3"/><rect x="5" y="7" width="1" height="3"/><rect x="6" y="6" width="1" height="3"/><rect x="7" y="5" width="1" height="3"/><rect x="8" y="4" width="1" height="3"/><rect x="9" y="3" width="1" height="3"/></svg>
<div class="a " style="left:541px;top:311px;width:77px;height:21px;background:#c8c8c8;box-shadow:inset -1px -1px 0 #fff,inset 1px 1px 0 #857873,inset -2px -2px 0 #c8c8c8,inset 2px 2px 0 #000;"></div>
<div class="t" style="left:576px;top:317px;font-size:11px;line-height:11px;color:#000;"><span style="left:0px;transform:scaleX(1.143)">1</span></div>
<div class="a " style="left:620px;top:311px;width:71px;height:21px;background:#c8c8c8;box-shadow:inset -1px -1px 0 #fff,inset 1px 1px 0 #857873,inset -2px -2px 0 #c8c8c8,inset 2px 2px 0 #000;"></div>
<div class="t" style="left:652px;top:317px;font-size:11px;line-height:11px;color:#000;"><span style="left:0px;transform:scaleX(1.143)">0</span></div>
<div class="a " style="left:693px;top:311px;width:63px;height:21px;background:#c8c8c8;box-shadow:inset -1px -1px 0 #fff,inset 1px 1px 0 #857873,inset -2px -2px 0 #c8c8c8,inset 2px 2px 0 #000;"></div>
<div class="t" style="left:721px;top:317px;font-size:11px;line-height:11px;color:#000;"><span style="left:0px;transform:scaleX(1.143)">0</span></div>
<div class="a " style="left:758px;top:311px;width:65px;height:21px;background:#c8c8c8;box-shadow:inset -1px -1px 0 #fff,inset 1px 1px 0 #857873,inset -2px -2px 0 #c8c8c8,inset 2px 2px 0 #000;"></div>
<div class="t" style="left:787px;top:317px;font-size:11px;line-height:11px;color:#000;"><span style="left:0px;transform:scaleX(1.143)">0</span></div>
<div class="a " style="left:825px;top:311px;width:87px;height:22px;background:#c8c8c8;border:1px solid #dccfcf;box-sizing:border-box;"></div>
<div class="a " style="left:825px;top:315px;width:13px;height:13px;background:#c8c8c8;box-shadow:inset -1px -1px 0 #fff,inset 1px 1px 0 #857873,inset -2px -2px 0 #d4d0c8,inset 2px 2px 0 #000;"></div>
<div class="a " style="left:914px;top:311px;width:70px;height:22px;background:#c8c8c8;border:1px solid #dccfcf;box-sizing:border-box;"></div>
<div class="a " style="left:914px;top:315px;width:13px;height:13px;background:#c8c8c8;box-shadow:inset -1px -1px 0 #fff,inset 1px 1px 0 #857873,inset -2px -2px 0 #d4d0c8,inset 2px 2px 0 #000;"></div>
<div class="a " style="left:986px;top:311px;width:69px;height:22px;background:#c8c8c8;border:1px solid #dccfcf;box-sizing:border-box;"></div>
<div class="a " style="left:986px;top:315px;width:13px;height:13px;background:#c8c8c8;box-shadow:inset -1px -1px 0 #fff,inset 1px 1px 0 #857873,inset -2px -2px 0 #d4d0c8,inset 2px 2px 0 #000;"></div>
<svg class="a" style="left:986px;top:315px" width="13" height="13" fill="#000" shape-rendering="crispEdges"><rect x="3" y="5" width="1" height="3"/><rect x="4" y="6" width="1" height="3"/><rect x="5" y="7" width="1" height="3"/><rect x="6" y="6" width="1" height="3"/><rect x="7" y="5" width="1" height="3"/><rect x="8" y="4" width="1" height="3"/><rect x="9" y="3" width="1" height="3"/></svg>
<div class="a " style="left:8px;top:335px;width:292px;height:22px;background:#c8c8c8;border:1px solid #dccfcf;box-sizing:border-box;"></div>
<div class="a " style="left:8px;top:339px;width:13px;height:13px;background:#fff;box-shadow:inset -1px -1px 0 #fff,inset 1px 1px 0 #857873,inset -2px -2px 0 #d4d0c8,inset 2px 2px 0 #000;"></div>
<svg class="a" style="left:8px;top:339px" width="13" height="13" fill="#000" shape-rendering="crispEdges"><rect x="3" y="5" width="1" height="3"/><rect x="4" y="6" width="1" height="3"/><rect x="5" y="7" width="1" height="3"/><rect x="6" y="6" width="1" height="3"/><rect x="7" y="5" width="1" height="3"/><rect x="8" y="4" width="1" height="3"/><rect x="9" y="3" width="1" height="3"/></svg>
<div class="t" style="left:27px;top:341px;font-size:11px;line-height:11px;color:#000;"><span style="left:0px;transform:scaleX(1.154)">Relaxation</span><span style="left:64px;transform:scaleX(1.165)">Time</span><span style="left:92.47px">,</span><span style="left:100px;transform:scaleX(1.176)">tau</span><span style="left:118.17px">(</span><span style="left:122px;transform:scaleX(1.143)">h</span><span style="left:129.17px">)</span><span style="left:137.47px">[</span><span style="left:141px;transform:scaleX(1.118)">ns</span><span style="left:154.47px">]</span></div>
<div class="a " style="left:302px;top:335px;width:87px;height:21px;background:#fff;box-shadow:inset -1px -1px 0 #fff,inset 1px 1px 0 #857873,inset -2px -2px 0 #c8c8c8,inset 2px 2px 0 #000;"></div>
<div class="t" style="left:333px;top:341px;font-size:11px;line-height:11px;color:#000;"><span style="left:0px;transform:scaleX(1.143)">8</span><span style="left:7.47px">.</span><span style="left:11px;transform:scaleX(1.143)">05</span></div>
<div class="a " style="left:391px;top:335px;width:94px;height:21px;background:#fff;box-shadow:inset -1px -1px 0 #fff,inset 1px 1px 0 #857873,inset -2px -2px 0 #c8c8c8,inset 2px 2px 0 #000;"></div>
<div class="t" style="left:434px;top:341px;font-size:11px;line-height:11px;color:#000;"><span style="left:0px;transform:scaleX(1.143)">4</span></div>
<div class="a " style="left:487px;top:335px;width:52px;height:22px;background:#c8c8c8;border:1px solid #dccfcf;box-sizing:border-box;"></div>
<div class="a " style="left:487px;top:339px;width:13px;height:13px;background:#c8c8c8;box-shadow:inset -1px -1px 0 #fff,inset 1px 1px 0 #857873,inset -2px -2px 0 #d4d0c8,inset 2px 2px 0 #000;"></div>
<svg class="a" style="left:487px;top:339px" width="13" height="13" fill="#000" shape-rendering="crispEdges"><rect x="3" y="5" width="1" height="3"/><rect x="4" y="6" width="1" height="3"/><rect x="5" y="7" width="1" height="3"/><rect x="6" y="6" width="1" height="3"/><rect x="7" y="5" width="1" height="3"/><rect x="8" y="4" width="1" height="3"/><rect x="9" y="3" width="1" height="3"/></svg>
<div class="a " style="left:541px;top:335px;width:77px;height:21px;background:#c8c8c8;box-shadow:inset -1px -1px 0 #fff,inset 1px 1px 0 #857873,inset -2px -2px 0 #c8c8c8,inset 2px 2px 0 #000;"></div>
<div class="t" style="left:576px;top:341px;font-size:11px;line-height:11px;color:#000;"><span style="left:0px;transform:scaleX(1.143)">1</span></div>
<div class="a " style="left:620px;top:335px;width:71px;height:21px;background:#c8c8c8;box-shadow:inset -1px -1px 0 #fff,inset 1px 1px 0 #857873,inset -2px -2px 0 #c8c8c8,inset 2px 2px 0 #000;"></div>
<div class="t" style="left:652px;top:341px;font-size:11px;line-height:11px;color:#000;"><span style="left:0px;transform:scaleX(1.143)">0</span></div>
<div class="a " style="left:693px;top:335px;width:63px;height:21px;background:#c8c8c8;box-shadow:inset -1px -1px 0 #fff,inset 1px 1px 0 #857873,inset -2px -2px 0 #c8c8c8,inset 2px 2px 0 #000;"></div>
<div class="t" style="left:721px;top:341px;font-size:11px;line-height:11px;color:#000;"><span style="left:0px;transform:scaleX(1.143)">0</span></div>
<div class="a " style="left:758px;top:335px;width:65px;height:21px;background:#c8c8c8;box-shadow:inset -1px -1px 0 #fff,inset 1px 1px 0 #857873,inset -2px -2px 0 #c8c8c8,inset 2px 2px 0 #000;"></div>
<div class="t" style="left:787px;top:341px;font-size:11px;line-height:11px;color:#000;"><span style="left:0px;transform:scaleX(1.143)">0</span></div>
<div class="a " style="left:825px;top:335px;width:87px;height:22px;background:#c8c8c8;border:1px solid #dccfcf;box-sizing:border-box;"></div>
<div class="a " style="left:825px;top:339px;width:13px;height:13px;background:#fff;box-shadow:inset -1px -1px 0 #fff,inset 1px 1px 0 #857873,inset -2px -2px 0 #d4d0c8,inset 2px 2px 0 #000;"></div>
<svg class="a" style="left:825px;top:339px" width="13" height="13" fill="#000" shape-rendering="crispEdges"><rect x="3" y="5" width="1" height="3"/><rect x="4" y="6" width="1" height="3"/><rect x="5" y="7" width="1" height="3"/><rect x="6" y="6" width="1" height="3"/><rect x="7" y="5" width="1" height="3"/><rect x="8" y="4" width="1" height="3"/><rect x="9" y="3" width="1" height="3"/></svg>
<div class="a " style="left:914px;top:335px;width:70px;height:22px;background:#c8c8c8;border:1px solid #dccfcf;box-sizing:border-box;"></div>
<div class="a " style="left:914px;top:339px;width:13px;height:13px;background:#fff;box-shadow:inset -1px -1px 0 #fff,inset 1px 1px 0 #857873,inset -2px -2px 0 #d4d0c8,inset 2px 2px 0 #000;"></div>
<svg class="a" style="left:914px;top:339px" width="13" height="13" fill="#000" shape-rendering="crispEdges"><rect x="3" y="5" width="1" height="3"/><rect x="4" y="6" width="1" height="3"/><rect x="5" y="7" width="1" height="3"/><rect x="6" y="6" width="1" height="3"/><rect x="7" y="5" width="1" height="3"/><rect x="8" y="4" width="1" height="3"/><rect x="9" y="3" width="1" height="3"/></svg>
<div class="a " style="left:986px;top:335px;width:69px;height:22px;background:#c8c8c8;border:1px solid #dccfcf;box-sizing:border-box;"></div>
<div class="a " style="left:986px;top:339px;width:13px;height:13px;background:#c8c8c8;box-shadow:inset -1px -1px 0 #fff,inset 1px 1px 0 #857873,inset -2px -2px 0 #d4d0c8,inset 2px 2px 0 #000;"></div>
<svg class="a" style="left:986px;top:339px" width="13" height="13" fill="#000" shape-rendering="crispEdges"><rect x="3" y="5" width="1" height="3"/><rect x="4" y="6" width="1" height="3"/><rect x="5" y="7" width="1" height="3"/><rect x="6" y="6" width="1" height="3"/><rect x="7" y="5" width="1" height="3"/><rect x="8" y="4" width="1" height="3"/><rect x="9" y="3" width="1" height="3"/></svg>
<div class="a " style="left:8px;top:359px;width:292px;height:22px;background:#c8c8c8;border:1px solid #dccfcf;box-sizing:border-box;"></div>
<div class="a " style="left:8px;top:363px;width:13px;height:13px;background:#fff;box-shadow:inset -1px -1px 0 #fff,inset 1px 1px 0 #857873,inset -2px -2px 0 #d4d0c8,inset 2px 2px 0 #000;"></div>
<svg class="a" style="left:8px;top:363px" width="13" height="13" fill="#000" shape-rendering="crispEdges"><rect x="3" y="5" width="1" height="3"/><rect x="4" y="6" width="1" height="3"/><rect x="5" y="7" width="1" height="3"/><rect x="6" y="6" width="1" height="3"/><rect x="7" y="5" width="1" height="3"/><rect x="8" y="4" width="1" height="3"/><rect x="9" y="3" width="1" height="3"/></svg>
<div class="t" style="left:27px;top:365px;font-size:11px;line-height:11px;color:#000;"><span style="left:0px;transform:scaleX(1.161)">Intrinsic</span><span style="left:48px;transform:scaleX(1.179)">viscosity</span><span style="left:101.47px">[</span><span style="left:105px;transform:scaleX(1.160)">cm</span><span style="left:123.92px">^</span><span style="left:131px;transform:scaleX(1.143)">3</span><span style="left:138.47px">/</span><span style="left:142px;transform:scaleX(1.143)">g</span><span style="left:149.47px">]</span></div>
<div class="a " style="left:302px;top:359px;width:87px;height:21px;background:#fff;box-shadow:inset -1px -1px 0 #fff,inset 1px 1px 0 #857873,inset -2px -2px 0 #c8c8c8,inset 2px 2px 0 #000;"></div>
<div class="t" style="left:336px;top:365px;font-size:11px;line-height:11px;color:#000;"><span style="left:0px;transform:scaleX(1.143)">3</span><span style="left:7.47px">.</span><span style="left:11px;transform:scaleX(1.143)">3</span></div>
<div class="a " style="left:391px;top:359px;width:94px;height:21px;background:#fff;box-shadow:inset -1px -1px 0 #fff,inset 1px 1px 0 #857873,inset -2px -2px 0 #c8c8c8,inset 2px 2px 0 #000;"></div>
<div class="t" style="left:434px;top:365px;font-size:11px;line-height:11px;color:#000;"><span style="left:0px;transform:scaleX(1.143)">3</span></div>
<div class="a " style="left:487px;top:359px;width:52px;height:22px;background:#c8c8c8;border:1px solid #dccfcf;box-sizing:border-box;"></div>
<div class="a " style="left:487px;top:363px;width:13px;height:13px;background:#c8c8c8;box-shadow:inset -1px -1px 0 #fff,inset 1px 1px 0 #857873,inset -2px -2px 0 #d4d0c8,inset 2px 2px 0 #000;"></div>
<svg class="a" style="left:487px;top:363px" width="13" height="13" fill="#000" shape-rendering="crispEdges"><rect x="3" y="5" width="1" height="3"/><rect x="4" y="6" width="1" height="3"/><rect x="5" y="7" width="1" height="3"/><rect x="6" y="6" width="1" height="3"/><rect x="7" y="5" width="1" height="3"/><rect x="8" y="4" width="1" height="3"/><rect x="9" y="3" width="1" height="3"/></svg>
<div class="a " style="left:541px;top:359px;width:77px;height:21px;background:#c8c8c8;box-shadow:inset -1px -1px 0 #fff,inset 1px 1px 0 #857873,inset -2px -2px 0 #c8c8c8,inset 2px 2px 0 #000;"></div>
<div class="t" style="left:576px;top:365px;font-size:11px;line-height:11px;color:#000;"><span style="left:0px;transform:scaleX(1.143)">1</span></div>
<div class="a " style="left:620px;top:359px;width:71px;height:21px;background:#c8c8c8;box-shadow:inset -1px -1px 0 #fff,inset 1px 1px 0 #857873,inset -2px -2px 0 #c8c8c8,inset 2px 2px 0 #000;"></div>
<div class="t" style="left:652px;top:365px;font-size:11px;line-height:11px;color:#000;"><span style="left:0px;transform:scaleX(1.143)">0</span></div>
<div class="a " style="left:693px;top:359px;width:63px;height:21px;background:#c8c8c8;box-shadow:inset -1px -1px 0 #fff,inset 1px 1px 0 #857873,inset -2px -2px 0 #c8c8c8,inset 2px 2px 0 #000;"></div>
<div class="t" style="left:721px;top:365px;font-size:11px;line-height:11px;color:#000;"><span style="left:0px;transform:scaleX(1.143)">0</span></div>
<div class="a " style="left:758px;top:359px;width:65px;height:21px;background:#c8c8c8;box-shadow:inset -1px -1px 0 #fff,inset 1px 1px 0 #857873,inset -2px -2px 0 #c8c8c8,inset 2px 2px 0 #000;"></div>
<div class="t" style="left:787px;top:365px;font-size:11px;line-height:11px;color:#000;"><span style="left:0px;transform:scaleX(1.143)">0</span></div>
<div class="a " style="left:825px;top:359px;width:87px;height:22px;background:#c8c8c8;border:1px solid #dccfcf;box-sizing:border-box;"></div>
<div class="a " style="left:825px;top:363px;width:13px;height:13px;background:#fff;box-shadow:inset -1px -1px 0 #fff,inset 1px 1px 0 #857873,inset -2px -2px 0 #d4d0c8,inset 2px 2px 0 #000;"></div>
<svg class="a" style="left:825px;top:363px" width="13" height="13" fill="#000" shape-rendering="crispEdges"><rect x="3" y="5" width="1" height="3"/><rect x="4" y="6" width="1" height="3"/><rect x="5" y="7" width="1" height="3"/><rect x="6" y="6" width="1" height="3"/><rect x="7" y="5" width="1" height="3"/><rect x="8" y="4" width="1" height="3"/><rect x="9" y="3" width="1" height="3"/></svg>
<div class="a " style="left:914px;top:359px;width:70px;height:22px;background:#c8c8c8;border:1px solid #dccfcf;box-sizing:border-box;"></div>
<div class="a " style="left:914px;top:363px;width:13px;height:13px;background:#fff;box-shadow:inset -1px -1px 0 #fff,inset 1px 1px 0 #857873,inset -2px -2px 0 #d4d0c8,inset 2px 2px 0 #000;"></div>
<svg class="a" style="left:914px;top:363px" width="13" height="13" fill="#000" shape-rendering="crispEdges"><rect x="3" y="5" width="1" height="3"/><rect x="4" y="6" width="1" height="3"/><rect x="5" y="7" width="1" height="3"/><rect x="6" y="6" width="1" height="3"/><rect x="7" y="5" width="1" height="3"/><rect x="8" y="4" width="1" height="3"/><rect x="9" y="3" width="1" height="3"/></svg>
<div class="a " style="left:986px;top:359px;width:69px;height:22px;background:#c8c8c8;border:1px solid #dccfcf;box-sizing:border-box;"></div>
<div class="a " style="left:986px;top:363px;width:13px;height:13px;background:#c8c8c8;box-shadow:inset -1px -1px 0 #fff,inset 1px 1px 0 #857873,inset -2px -2px 0 #d4d0c8,inset 2px 2px 0 #000;"></div>
<svg class="a" style="left:986px;top:363px" width="13" height="13" fill="#000" shape-rendering="crispEdges"><rect x="3" y="5" width="1" height="3"/><rect x="4" y="6" width="1" height="3"/><rect x="5" y="7" width="1" height="3"/><rect x="6" y="6" width="1" height="3"/><rect x="7" y="5" width="1" height="3"/><rect x="8" y="4" width="1" height="3"/><rect x="9" y="3" width="1" height="3"/></svg>
<div class="a " style="left:8px;top:383px;width:349px;height:30px;background:#00dede;box-shadow:inset -1px -1px 0 #000,inset 1px 1px 0 #fff,inset -2px -2px 0 #857773,inset 2px 2px 0 #00dede;"></div>
<div class="t" style="left:132px;top:392px;font-size:12px;line-height:12px;color:#000;"><span style="left:0px;transform:scaleX(1.087)">Load</span><span style="left:33px;transform:scaleX(1.096)">Parameters</span></div>
<div class="a " style="left:357px;top:383px;width:349px;height:30px;background:#00dede;box-shadow:inset -1px -1px 0 #000,inset 1px 1px 0 #fff,inset -2px -2px 0 #857773,inset 2px 2px 0 #00dede;"></div>
<div class="t" style="left:479px;top:392px;font-size:12px;line-height:12px;color:#000;"><span style="left:0px;transform:scaleX(1.053)">Reset</span><span style="left:37px;transform:scaleX(1.096)">Parameters</span></div>
<div class="a " style="left:706px;top:383px;width:349px;height:30px;background:#00dede;box-shadow:inset -1px -1px 0 #000,inset 1px 1px 0 #fff,inset -2px -2px 0 #857773,inset 2px 2px 0 #00dede;"></div>
<div class="t" style="left:830px;top:392px;font-size:12px;line-height:12px;color:#000;"><span style="left:0px;transform:scaleX(1.061)">Save</span><span style="left:33px;transform:scaleX(1.096)">Parameters</span></div>
<div class="a " style="left:8px;top:415px;width:1047px;height:30px;background:#037575;box-shadow:inset -1px -1px 0 #000,inset 1px 1px 0 #fff,inset -2px -2px 0 #857873,inset 2px 2px 0 #000;"></div>
<div class="t" style="left:479px;top:424px;font-size:12px;line-height:12px;color:#fff;font-weight:bold;"><span style="left:0px;transform:scaleX(1.094)">CSV</span><span style="left:31px;transform:scaleX(1.144)">Processing</span></div>
<div class="a " style="left:8px;top:447px;width:349px;height:30px;background:#00dede;box-shadow:inset -1px -1px 0 #000,inset 1px 1px 0 #fff,inset -2px -2px 0 #857773,inset 2px 2px 0 #00dede;"></div>
<div class="t" style="left:168px;top:456px;font-size:12px;line-height:12px;color:#000;"><span style="left:0px;transform:scaleX(1.087)">Load</span></div>
<div class="a " style="left:357px;top:447px;width:349px;height:30px;background:#00dede;box-shadow:inset -1px -1px 0 #000,inset 1px 1px 0 #fff,inset -2px -2px 0 #857773,inset 2px 2px 0 #00dede;"></div>
<div class="t" style="left:509px;top:456px;font-size:12px;line-height:12px;color:#000;"><span style="left:0px;transform:scaleX(1.038)">Process</span></div>
<div class="a " style="left:706px;top:447px;width:349px;height:30px;background:#00dede;box-shadow:inset -1px -1px 0 #000,inset 1px 1px 0 #fff,inset -2px -2px 0 #857773,inset 2px 2px 0 #00dede;"></div>
<div class="t" style="left:866px;top:456px;font-size:12px;line-height:12px;color:#000;"><span style="left:0px;transform:scaleX(1.061)">Save</span></div>
<div class="a " style="left:8px;top:479px;width:349px;height:180px;background:#fff;box-shadow:inset -1px -1px 0 #000,inset 1px 1px 0 #fff,inset -2px -2px 0 #4a4444,inset 2px 2px 0 #e9e1d6;"></div>
<div class="a lb8" style="left:10px;top:481px;width:329px;height:160px;background:#000080;overflow:hidden;"></div>
<div class="t" style="left:13px;top:482px;font-size:12px;line-height:12px;color:#fff;font-weight:bold;"><span style="left:0.34px">/</span><span style="left:4px;transform:scaleX(1.200)">root</span><span style="left:32.34px">/</span><span style="left:36px;transform:scaleX(1.200)">ultrascan</span><span style="left:100.34px">/</span><span style="left:104px;transform:scaleX(1.094)">somo</span><span style="left:139.34px">/</span><span style="left:143px;transform:scaleX(1.093)">2AAS</span><span style="left:177.66px">_</span><span style="left:184px;transform:scaleX(1.199)">10</span><span style="left:200.50px">-</span><span style="left:205px;transform:scaleX(1.135)">A20R50hiOT</span><span style="left:286.50px">-</span><span style="left:291px;transform:scaleX(1.071)">so</span><span style="left:306.84px">.</span><span style="left:311px;transform:scaleX(1.099)">csv</span></div>
<div class="t" style="left:13px;top:500px;font-size:12px;line-height:12px;color:#fff;font-weight:bold;"><span style="left:0.34px">/</span><span style="left:4px;transform:scaleX(1.200)">root</span><span style="left:32.34px">/</span><span style="left:36px;transform:scaleX(1.200)">ultrascan</span><span style="left:100.34px">/</span><span style="left:104px;transform:scaleX(1.094)">somo</span><span style="left:139.34px">/</span><span style="left:143px;transform:scaleX(1.093)">2AAS</span><span style="left:177.66px">_</span><span style="left:184px;transform:scaleX(1.199)">8</span><span style="left:192.50px">-</span><span style="left:197px;transform:scaleX(1.135)">A20R50hiOT</span><span style="left:278.50px">-</span><span style="left:283px;transform:scaleX(1.071)">so</span><span style="left:298.84px">.</span><span style="left:303px;transform:scaleX(1.099)">csv</span></div>
<div class="t" style="left:13px;top:518px;font-size:12px;line-height:12px;color:#fff;font-weight:bold;"><span style="left:0.34px">/</span><span style="left:4px;transform:scaleX(1.200)">root</span><span style="left:32.34px">/</span><span style="left:36px;transform:scaleX(1.200)">ultrascan</span><span style="left:100.34px">/</span><span style="left:104px;transform:scaleX(1.094)">somo</span><span style="left:139.34px">/</span><span style="left:143px;transform:scaleX(1.093)">2AAS</span><span style="left:177.66px">_</span><span style="left:184px;transform:scaleX(1.199)">7</span><span style="left:192.50px">-</span><span style="left:197px;transform:scaleX(1.135)">A20R50hiOT</span><span style="left:278.50px">-</span><span style="left:283px;transform:scaleX(1.071)">so</span><span style="left:298.84px">.</span><span style="left:303px;transform:scaleX(1.099)">csv</span></div>
<div class="t" style="left:13px;top:536px;font-size:12px;line-height:12px;color:#fff;font-weight:bold;"><span style="left:0.34px">/</span><span style="left:4px;transform:scaleX(1.200)">root</span><span style="left:32.34px">/</span><span style="left:36px;transform:scaleX(1.200)">ultrascan</span><span style="left:100.34px">/</span><span style="left:104px;transform:scaleX(1.094)">somo</span><span style="left:139.34px">/</span><span style="left:143px;transform:scaleX(1.093)">2AAS</span><span style="left:177.66px">_</span><span style="left:184px;transform:scaleX(1.199)">6</span><span style="left:192.50px">-</span><span style="left:197px;transform:scaleX(1.135)">A20R50hiOT</span><span style="left:278.50px">-</span><span style="left:283px;transform:scaleX(1.071)">so</span><span style="left:298.84px">.</span><span style="left:303px;transform:scaleX(1.099)">csv</span></div>
<div class="t" style="left:13px;top:554px;font-size:12px;line-height:12px;color:#fff;font-weight:bold;"><span style="left:0.34px">/</span><span style="left:4px;transform:scaleX(1.200)">root</span><span style="left:32.34px">/</span><span style="left:36px;transform:scaleX(1.200)">ultrascan</span><span style="left:100.34px">/</span><span style="left:104px;transform:scaleX(1.094)">somo</span><span style="left:139.34px">/</span><span style="left:143px;transform:scaleX(1.093)">2AAS</span><span style="left:177.66px">_</span><span style="left:184px;transform:scaleX(1.199)">5</span><span style="left:192.50px">-</span><span style="left:197px;transform:scaleX(1.135)">A20R50hiOT</span><span style="left:278.50px">-</span><span style="left:283px;transform:scaleX(1.071)">so</span><span style="left:298.84px">.</span><span style="left:303px;transform:scaleX(1.099)">csv</span></div>
<div class="t" style="left:13px;top:572px;font-size:12px;line-height:12px;color:#fff;font-weight:bold;"><span style="left:0.34px">/</span><span style="left:4px;transform:scaleX(1.200)">root</span><span style="left:32.34px">/</span><span style="left:36px;transform:scaleX(1.200)">ultrascan</span><span style="left:100.34px">/</span><span style="left:104px;transform:scaleX(1.094)">somo</span><span style="left:139.34px">/</span><span style="left:143px;transform:scaleX(1.093)">2AAS</span><span style="left:177.66px">_</span><span style="left:184px;transform:scaleX(1.199)">4</span><span style="left:192.50px">-</span><span style="left:197px;transform:scaleX(1.135)">A20R50hiOT</span><span style="left:278.50px">-</span><span style="left:283px;transform:scaleX(1.071)">so</span><span style="left:298.84px">.</span><span style="left:303px;transform:scaleX(1.099)">csv</span></div>
<div class="t" style="left:13px;top:590px;font-size:12px;line-height:12px;color:#fff;font-weight:bold;"><span style="left:0.34px">/</span><span style="left:4px;transform:scaleX(1.200)">root</span><span style="left:32.34px">/</span><span style="left:36px;transform:scaleX(1.200)">ultrascan</span><span style="left:100.34px">/</span><span style="left:104px;transform:scaleX(1.094)">somo</span><span style="left:139.34px">/</span><span style="left:143px;transform:scaleX(1.093)">2AAS</span><span style="left:177.66px">_</span><span style="left:184px;transform:scaleX(1.199)">3</span><span style="left:192.50px">-</span><span style="left:197px;transform:scaleX(1.135)">A20R50hiOT</span><span style="left:278.50px">-</span><span style="left:283px;transform:scaleX(1.071)">so</span><span style="left:298.84px">.</span><span style="left:303px;transform:scaleX(1.099)">csv</span></div>
<div class="t" style="left:13px;top:608px;font-size:12px;line-height:12px;color:#fff;font-weight:bold;"><span style="left:0.34px">/</span><span style="left:4px;transform:scaleX(1.200)">root</span><span style="left:32.34px">/</span><span style="left:36px;transform:scaleX(1.200)">ultrascan</span><span style="left:100.34px">/</span><span style="left:104px;transform:scaleX(1.094)">somo</span><span style="left:139.34px">/</span><span style="left:143px;transform:scaleX(1.093)">2AAS</span><span style="left:177.66px">_</span><span style="left:184px;transform:scaleX(1.199)">2</span><span style="left:192.50px">-</span><span style="left:197px;transform:scaleX(1.135)">A20R50hiOT</span><span style="left:278.50px">-</span><span style="left:283px;transform:scaleX(1.071)">so</span><span style="left:298.84px">.</span><span style="left:303px;transform:scaleX(1.099)">csv</span></div>
<div class="t" style="left:13px;top:626px;font-size:12px;line-height:12px;color:#fff;font-weight:bold;"><span style="left:0.34px">/</span><span style="left:4px;transform:scaleX(1.200)">root</span><span style="left:32.34px">/</span><span style="left:36px;transform:scaleX(1.200)">ultrascan</span><span style="left:100.34px">/</span><span style="left:104px;transform:scaleX(1.094)">somo</span><span style="left:139.34px">/</span><span style="left:143px;transform:scaleX(1.093)">2AAS</span><span style="left:177.66px">_</span><span style="left:184px;transform:scaleX(1.199)">1</span><span style="left:192.50px">-</span><span style="left:197px;transform:scaleX(1.135)">A20R50hiOT</span><span style="left:278.50px">-</span><span style="left:283px;transform:scaleX(1.071)">so</span><span style="left:298.84px">.</span><span style="left:303px;transform:scaleX(1.099)">csv</span></div>
<div class="a " style="left:339px;top:481px;width:16px;height:160px;background:#fff;"></div>
<div class="a " style="left:339px;top:481px;width:16px;height:16px;background:#c8c8c8;box-shadow:inset -1px -1px 0 #000,inset 1px 1px 0 #ececec,inset -2px -2px 0 #8c8c8c,inset 2px 2px 0 #c8c8c8;"></div>
<svg class="a" style="left:343px;top:487px" width="7" height="4" shape-rendering="crispEdges"><rect x="3" y="0" width="1" height="1"/><rect x="2" y="1" width="3" height="1"/><rect x="1" y="2" width="5" height="1"/><rect x="0" y="3" width="7" height="1"/></svg>
<div class="a " style="left:339px;top:590px;width:16px;height:35px;background:#c8c8c8;box-shadow:inset -1px -1px 0 #000,inset 1px 1px 0 #ececec,inset -2px -2px 0 #8c8c8c,inset 2px 2px 0 #c8c8c8;"></div>
<div class="a " style="left:339px;top:625px;width:16px;height:16px;background:#c8c8c8;box-shadow:inset -1px -1px 0 #000,inset 1px 1px 0 #ececec,inset -2px -2px 0 #8c8c8c,inset 2px 2px 0 #c8c8c8;"></div>
<svg class="a" style="left:343px;top:631px" width="7" height="4" shape-rendering="crispEdges"><rect x="0" y="0" width="7" height="1"/><rect x="1" y="1" width="5" height="1"/><rect x="2" y="2" width="3" height="1"/><rect x="3" y="3" width="1" height="1"/></svg>
<div class="a " style="left:10px;top:641px;width:345px;height:16px;background:#fff;"></div>
<div class="a " style="left:10px;top:641px;width:16px;height:16px;background:#c8c8c8;box-shadow:inset -1px -1px 0 #000,inset 1px 1px 0 #ececec,inset -2px -2px 0 #8c8c8c,inset 2px 2px 0 #c8c8c8;"></div>
<svg class="a" style="left:15px;top:646px" width="4" height="7" shape-rendering="crispEdges"><rect x="0" y="3" width="1" height="1"/><rect x="1" y="2" width="1" height="3"/><rect x="2" y="1" width="1" height="5"/><rect x="3" y="0" width="1" height="7"/></svg>
<div class="a " style="left:26px;top:641px;width:287px;height:16px;background:#c8c8c8;box-shadow:inset -1px -1px 0 #000,inset 1px 1px 0 #ececec,inset -2px -2px 0 #8c8c8c,inset 2px 2px 0 #c8c8c8;"></div>
<div class="a " style="left:323px;top:641px;width:16px;height:16px;background:#c8c8c8;box-shadow:inset -1px -1px 0 #000,inset 1px 1px 0 #ececec,inset -2px -2px 0 #8c8c8c,inset 2px 2px 0 #c8c8c8;"></div>
<svg class="a" style="left:329px;top:646px" width="4" height="7" shape-rendering="crispEdges"><rect x="0" y="0" width="1" height="7"/><rect x="1" y="1" width="1" height="5"/><rect x="2" y="2" width="1" height="3"/><rect x="3" y="3" width="1" height="1"/></svg>
<div class="a " style="left:357px;top:479px;width:349px;height:180px;background:#fff;box-shadow:inset -1px -1px 0 #000,inset 1px 1px 0 #fff,inset -2px -2px 0 #4a4444,inset 2px 2px 0 #e9e1d6;"></div>
<div class="a lb357" style="left:359px;top:481px;width:329px;height:160px;background:#000080;overflow:hidden;"></div>
<div class="t" style="left:362px;top:482px;font-size:12px;line-height:12px;color:#fff;font-weight:bold;"><span style="left:0px;transform:scaleX(1.093)">2AAS</span><span style="left:34.66px">_</span><span style="left:41px;transform:scaleX(1.199)">10</span><span style="left:57.50px">-</span><span style="left:62px;transform:scaleX(1.135)">A20R50hiOT</span><span style="left:143.50px">-</span><span style="left:148px;transform:scaleX(1.071)">so</span><span style="left:163.50px">:</span><span style="left:172px;transform:scaleX(1.093)">2AAS</span><span style="left:206.66px">_</span><span style="left:213px;transform:scaleX(1.199)">10</span><span style="left:229.50px">-</span><span style="left:234px;transform:scaleX(1.135)">A20R50hiOT</span><span style="left:315.50px">-</span><span style="left:320px;transform:scaleX(1.071)">so</span></div>
<div class="t" style="left:362px;top:500px;font-size:12px;line-height:12px;color:#fff;font-weight:bold;"><span style="left:0px;transform:scaleX(1.093)">2AAS</span><span style="left:34.66px">_</span><span style="left:41px;transform:scaleX(1.199)">8</span><span style="left:49.50px">-</span><span style="left:54px;transform:scaleX(1.135)">A20R50hiOT</span><span style="left:135.50px">-</span><span style="left:140px;transform:scaleX(1.071)">so</span><span style="left:155.50px">:</span><span style="left:164px;transform:scaleX(1.093)">2AAS</span><span style="left:198.66px">_</span><span style="left:205px;transform:scaleX(1.199)">8</span><span style="left:213.50px">-</span><span style="left:218px;transform:scaleX(1.135)">A20R50hiOT</span><span style="left:299.50px">-</span><span style="left:304px;transform:scaleX(1.071)">so</span></div>
<div class="t" style="left:362px;top:518px;font-size:12px;line-height:12px;color:#fff;font-weight:bold;"><span style="left:0px;transform:scaleX(1.093)">2AAS</span><span style="left:34.66px">_</span><span style="left:41px;transform:scaleX(1.199)">7</span><span style="left:49.50px">-</span><span style="left:54px;transform:scaleX(1.135)">A20R50hiOT</span><span style="left:135.50px">-</span><span style="left:140px;transform:scaleX(1.071)">so</span><span style="left:155.50px">:</span><span style="left:164px;transform:scaleX(1.093)">2AAS</span><span style="left:198.66px">_</span><span style="left:205px;transform:scaleX(1.199)">7</span><span style="left:213.50px">-</span><span style="left:218px;transform:scaleX(1.135)">A20R50hiOT</span><span style="left:299.50px">-</span><span style="left:304px;transform:scaleX(1.071)">so</span></div>
<div class="t" style="left:362px;top:536px;font-size:12px;line-height:12px;color:#fff;font-weight:bold;"><span style="left:0px;transform:scaleX(1.093)">2AAS</span><span style="left:34.66px">_</span><span style="left:41px;transform:scaleX(1.199)">6</span><span style="left:49.50px">-</span><span style="left:54px;transform:scaleX(1.135)">A20R50hiOT</span><span style="left:135.50px">-</span><span style="left:140px;transform:scaleX(1.071)">so</span><span style="left:155.50px">:</span><span style="left:164px;transform:scaleX(1.093)">2AAS</span><span style="left:198.66px">_</span><span style="left:205px;transform:scaleX(1.199)">6</span><span style="left:213.50px">-</span><span style="left:218px;transform:scaleX(1.135)">A20R50hiOT</span><span style="left:299.50px">-</span><span style="left:304px;transform:scaleX(1.071)">so</span></div>
<div class="t" style="left:362px;top:554px;font-size:12px;line-height:12px;color:#fff;font-weight:bold;"><span style="left:0px;transform:scaleX(1.093)">2AAS</span><span style="left:34.66px">_</span><span style="left:41px;transform:scaleX(1.199)">5</span><span style="left:49.50px">-</span><span style="left:54px;transform:scaleX(1.135)">A20R50hiOT</span><span style="left:135.50px">-</span><span style="left:140px;transform:scaleX(1.071)">so</span><span style="left:155.50px">:</span><span style="left:164px;transform:scaleX(1.093)">2AAS</span><span style="left:198.66px">_</span><span style="left:205px;transform:scaleX(1.199)">5</span><span style="left:213.50px">-</span><span style="left:218px;transform:scaleX(1.135)">A20R50hiOT</span><span style="left:299.50px">-</span><span style="left:304px;transform:scaleX(1.071)">so</span></div>
<div class="t" style="left:362px;top:572px;font-size:12px;line-height:12px;color:#fff;font-weight:bold;"><span style="left:0px;transform:scaleX(1.093)">2AAS</span><span style="left:34.66px">_</span><span style="left:41px;transform:scaleX(1.199)">4</span><span style="left:49.50px">-</span><span style="left:54px;transform:scaleX(1.135)">A20R50hiOT</span><span style="left:135.50px">-</span><span style="left:140px;transform:scaleX(1.071)">so</span><span style="left:155.50px">:</span><span style="left:164px;transform:scaleX(1.093)">2AAS</span><span style="left:198.66px">_</span><span style="left:205px;transform:scaleX(1.199)">4</span><span style="left:213.50px">-</span><span style="left:218px;transform:scaleX(1.135)">A20R50hiOT</span><span style="left:299.50px">-</span><span style="left:304px;transform:scaleX(1.071)">so</span></div>
<div class="t" style="left:362px;top:590px;font-size:12px;line-height:12px;color:#fff;font-weight:bold;"><span style="left:0px;transform:scaleX(1.093)">2AAS</span><span style="left:34.66px">_</span><span style="left:41px;transform:scaleX(1.199)">3</span><span style="left:49.50px">-</span><span style="left:54px;transform:scaleX(1.135)">A20R50hiOT</span><span style="left:135.50px">-</span><span style="left:140px;transform:scaleX(1.071)">so</span><span style="left:155.50px">:</span><span style="left:164px;transform:scaleX(1.093)">2AAS</span><span style="left:198.66px">_</span><span style="left:205px;transform:scaleX(1.199)">3</span><span style="left:213.50px">-</span><span style="left:218px;transform:scaleX(1.135)">A20R50hiOT</span><span style="left:299.50px">-</span><span style="left:304px;transform:scaleX(1.071)">so</span></div>
<div class="t" style="left:362px;top:608px;font-size:12px;line-height:12px;color:#fff;font-weight:bold;"><span style="left:0px;transform:scaleX(1.093)">2AAS</span><span style="left:34.66px">_</span><span style="left:41px;transform:scaleX(1.199)">2</span><span style="left:49.50px">-</span><span style="left:54px;transform:scaleX(1.135)">A20R50hiOT</span><span style="left:135.50px">-</span><span style="left:140px;transform:scaleX(1.071)">so</span><span style="left:155.50px">:</span><span style="left:164px;transform:scaleX(1.093)">2AAS</span><span style="left:198.66px">_</span><span style="left:205px;transform:scaleX(1.199)">2</span><span style="left:213.50px">-</span><span style="left:218px;transform:scaleX(1.135)">A20R50hiOT</span><span style="left:299.50px">-</span><span style="left:304px;transform:scaleX(1.071)">so</span></div>
<div class="t" style="left:362px;top:626px;font-size:12px;line-height:12px;color:#fff;font-weight:bold;"><span style="left:0px;transform:scaleX(1.093)">2AAS</span><span style="left:34.66px">_</span><span style="left:41px;transform:scaleX(1.199)">1</span><span style="left:49.50px">-</span><span style="left:54px;transform:scaleX(1.135)">A20R50hiOT</span><span style="left:135.50px">-</span><span style="left:140px;transform:scaleX(1.071)">so</span><span style="left:155.50px">:</span><span style="left:164px;transform:scaleX(1.093)">2AAS</span><span style="left:198.66px">_</span><span style="left:205px;transform:scaleX(1.199)">1</span><span style="left:213.50px">-</span><span style="left:218px;transform:scaleX(1.135)">A20R50hiOT</span><span style="left:299.50px">-</span><span style="left:304px;transform:scaleX(1.071)">so</span></div>
<div class="a " style="left:688px;top:481px;width:16px;height:160px;background:#fff;"></div>
<div class="a " style="left:688px;top:481px;width:16px;height:16px;background:#c8c8c8;box-shadow:inset -1px -1px 0 #000,inset 1px 1px 0 #ececec,inset -2px -2px 0 #8c8c8c,inset 2px 2px 0 #c8c8c8;"></div>
<svg class="a" style="left:692px;top:487px" width="7" height="4" shape-rendering="crispEdges"><rect x="3" y="0" width="1" height="1"/><rect x="2" y="1" width="3" height="1"/><rect x="1" y="2" width="5" height="1"/><rect x="0" y="3" width="7" height="1"/></svg>
<div class="a " style="left:688px;top:590px;width:16px;height:35px;background:#c8c8c8;box-shadow:inset -1px -1px 0 #000,inset 1px 1px 0 #ececec,inset -2px -2px 0 #8c8c8c,inset 2px 2px 0 #c8c8c8;"></div>
<div class="a " style="left:688px;top:625px;width:16px;height:16px;background:#c8c8c8;box-shadow:inset -1px -1px 0 #000,inset 1px 1px 0 #ececec,inset -2px -2px 0 #8c8c8c,inset 2px 2px 0 #c8c8c8;"></div>
<svg class="a" style="left:692px;top:631px" width="7" height="4" shape-rendering="crispEdges"><rect x="0" y="0" width="7" height="1"/><rect x="1" y="1" width="5" height="1"/><rect x="2" y="2" width="3" height="1"/><rect x="3" y="3" width="1" height="1"/></svg>
<div class="a " style="left:359px;top:641px;width:345px;height:16px;background:#fff;"></div>
<div class="a " style="left:359px;top:641px;width:16px;height:16px;background:#c8c8c8;box-shadow:inset -1px -1px 0 #000,inset 1px 1px 0 #ececec,inset -2px -2px 0 #8c8c8c,inset 2px 2px 0 #c8c8c8;"></div>
<svg class="a" style="left:364px;top:646px" width="4" height="7" shape-rendering="crispEdges"><rect x="0" y="3" width="1" height="1"/><rect x="1" y="2" width="1" height="3"/><rect x="2" y="1" width="1" height="5"/><rect x="3" y="0" width="1" height="7"/></svg>
<div class="a " style="left:375px;top:641px;width:286px;height:16px;background:#c8c8c8;box-shadow:inset -1px -1px 0 #000,inset 1px 1px 0 #ececec,inset -2px -2px 0 #8c8c8c,inset 2px 2px 0 #c8c8c8;"></div>
<div class="a " style="left:672px;top:641px;width:16px;height:16px;background:#c8c8c8;box-shadow:inset -1px -1px 0 #000,inset 1px 1px 0 #ececec,inset -2px -2px 0 #8c8c8c,inset 2px 2px 0 #c8c8c8;"></div>
<svg class="a" style="left:678px;top:646px" width="4" height="7" shape-rendering="crispEdges"><rect x="0" y="0" width="1" height="7"/><rect x="1" y="1" width="1" height="5"/><rect x="2" y="2" width="1" height="3"/><rect x="3" y="3" width="1" height="1"/></svg>
<div class="a " style="left:706px;top:479px;width:349px;height:22px;background:#c8c8c8;"></div>
<div class="t" style="left:713px;top:484px;font-size:11px;line-height:11px;color:#000;"><span style="left:0px;transform:scaleX(1.072)">File</span></div>
<div class="a " style="left:713px;top:494px;width:6px;height:1px;background:#1a1a1a;"></div>
<div class="a " style="left:706px;top:501px;width:349px;height:210px;background:#fff;box-shadow:inset -1px -1px 0 #fff,inset 1px 1px 0 #857873,inset -2px -2px 0 #d4d0c8,inset 2px 2px 0 #000;"></div>
<div class="a" style="left:708px;top:503px;width:329px;height:206px;overflow:hidden;">
<div class="t" style="left:4px;top:-2px;font-size:10px;line-height:10px;color:#000;"><span style="left:0px;transform:scaleX(1.099)">loaded</span><span style="left:33.11px">:</span><span style="left:39.11px">/</span><span style="left:42px;transform:scaleX(1.160)">root</span><span style="left:62.11px">/</span><span style="left:65px;transform:scaleX(1.134)">ultrascan</span><span style="left:111.11px">/</span><span style="left:114px;transform:scaleX(1.104)">somo</span><span style="left:141.11px">/</span><span style="left:144px;transform:scaleX(1.016)">2AAS</span><span style="left:169.72px">_</span><span style="left:175px;transform:scaleX(1.155)">11</span><span style="left:187.34px">-</span><span style="left:191px;transform:scaleX(1.055)">A20R50hiOT</span><span style="left:252.34px">-</span><span style="left:256px;transform:scaleX(1.041)">so</span><span style="left:267.11px">.</span><span style="left:270px;transform:scaleX(1.133)">csv</span></div>
<div class="t" style="left:4px;top:12px;font-size:10px;line-height:10px;color:#000;"><span style="left:0px;transform:scaleX(1.099)">loaded</span><span style="left:33.11px">:</span><span style="left:39.11px">/</span><span style="left:42px;transform:scaleX(1.160)">root</span><span style="left:62.11px">/</span><span style="left:65px;transform:scaleX(1.134)">ultrascan</span><span style="left:111.11px">/</span><span style="left:114px;transform:scaleX(1.104)">somo</span><span style="left:141.11px">/</span><span style="left:144px;transform:scaleX(1.016)">2AAS</span><span style="left:169.72px">_</span><span style="left:175px;transform:scaleX(1.079)">9</span><span style="left:181.34px">-</span><span style="left:185px;transform:scaleX(1.055)">A20R50hiOT</span><span style="left:246.34px">-</span><span style="left:250px;transform:scaleX(1.041)">so</span><span style="left:261.11px">.</span><span style="left:264px;transform:scaleX(1.133)">csv</span></div>
<div class="t" style="left:4px;top:26px;font-size:10px;line-height:10px;color:#000;"><span style="left:0px;transform:scaleX(1.099)">loaded</span><span style="left:33.11px">:</span><span style="left:39.11px">/</span><span style="left:42px;transform:scaleX(1.160)">root</span><span style="left:62.11px">/</span><span style="left:65px;transform:scaleX(1.134)">ultrascan</span><span style="left:111.11px">/</span><span style="left:114px;transform:scaleX(1.104)">somo</span><span style="left:141.11px">/</span><span style="left:144px;transform:scaleX(1.016)">2AAS</span><span style="left:169.72px">_</span><span style="left:175px;transform:scaleX(1.079)">10</span><span style="left:187.34px">-</span><span style="left:191px;transform:scaleX(1.055)">A20R50hiOT</span><span style="left:252.34px">-</span><span style="left:256px;transform:scaleX(1.041)">so</span><span style="left:267.11px">.</span><span style="left:270px;transform:scaleX(1.133)">csv</span></div>
<div class="t" style="left:4px;top:40px;font-size:10px;line-height:10px;color:#000;"><span style="left:0px;transform:scaleX(1.099)">loaded</span><span style="left:33.11px">:</span><span style="left:39.11px">/</span><span style="left:42px;transform:scaleX(1.160)">root</span><span style="left:62.11px">/</span><span style="left:65px;transform:scaleX(1.134)">ultrascan</span><span style="left:111.11px">/</span><span style="left:114px;transform:scaleX(1.104)">somo</span><span style="left:141.11px">/</span><span style="left:144px;transform:scaleX(1.016)">2AAS</span><span style="left:169.72px">_</span><span style="left:175px;transform:scaleX(1.079)">8</span><span style="left:181.34px">-</span><span style="left:185px;transform:scaleX(1.055)">A20R50hiOT</span><span style="left:246.34px">-</span><span style="left:250px;transform:scaleX(1.041)">so</span><span style="left:261.11px">.</span><span style="left:264px;transform:scaleX(1.133)">csv</span></div>
<div class="t" style="left:4px;top:54px;font-size:10px;line-height:10px;color:#000;"><span style="left:0px;transform:scaleX(1.099)">loaded</span><span style="left:33.11px">:</span><span style="left:39.11px">/</span><span style="left:42px;transform:scaleX(1.160)">root</span><span style="left:62.11px">/</span><span style="left:65px;transform:scaleX(1.134)">ultrascan</span><span style="left:111.11px">/</span><span style="left:114px;transform:scaleX(1.104)">somo</span><span style="left:141.11px">/</span><span style="left:144px;transform:scaleX(1.016)">2AAS</span><span style="left:169.72px">_</span><span style="left:175px;transform:scaleX(1.079)">7</span><span style="left:181.34px">-</span><span style="left:185px;transform:scaleX(1.055)">A20R50hiOT</span><span style="left:246.34px">-</span><span style="left:250px;transform:scaleX(1.041)">so</span><span style="left:261.11px">.</span><span style="left:264px;transform:scaleX(1.133)">csv</span></div>
<div class="t" style="left:4px;top:68px;font-size:10px;line-height:10px;color:#000;"><span style="left:0px;transform:scaleX(1.099)">loaded</span><span style="left:33.11px">:</span><span style="left:39.11px">/</span><span style="left:42px;transform:scaleX(1.160)">root</span><span style="left:62.11px">/</span><span style="left:65px;transform:scaleX(1.134)">ultrascan</span><span style="left:111.11px">/</span><span style="left:114px;transform:scaleX(1.104)">somo</span><span style="left:141.11px">/</span><span style="left:144px;transform:scaleX(1.016)">2AAS</span><span style="left:169.72px">_</span><span style="left:175px;transform:scaleX(1.079)">6</span><span style="left:181.34px">-</span><span style="left:185px;transform:scaleX(1.055)">A20R50hiOT</span><span style="left:246.34px">-</span><span style="left:250px;transform:scaleX(1.041)">so</span><span style="left:261.11px">.</span><span style="left:264px;transform:scaleX(1.133)">csv</span></div>
<div class="t" style="left:4px;top:82px;font-size:10px;line-height:10px;color:#000;"><span style="left:0px;transform:scaleX(1.099)">loaded</span><span style="left:33.11px">:</span><span style="left:39.11px">/</span><span style="left:42px;transform:scaleX(1.160)">root</span><span style="left:62.11px">/</span><span style="left:65px;transform:scaleX(1.134)">ultrascan</span><span style="left:111.11px">/</span><span style="left:114px;transform:scaleX(1.104)">somo</span><span style="left:141.11px">/</span><span style="left:144px;transform:scaleX(1.016)">2AAS</span><span style="left:169.72px">_</span><span style="left:175px;transform:scaleX(1.079)">5</span><span style="left:181.34px">-</span><span style="left:185px;transform:scaleX(1.055)">A20R50hiOT</span><span style="left:246.34px">-</span><span style="left:250px;transform:scaleX(1.041)">so</span><span style="left:261.11px">.</span><span style="left:264px;transform:scaleX(1.133)">csv</span></div>
<div class="t" style="left:4px;top:96px;font-size:10px;line-height:10px;color:#000;"><span style="left:0px;transform:scaleX(1.099)">loaded</span><span style="left:33.11px">:</span><span style="left:39.11px">/</span><span style="left:42px;transform:scaleX(1.160)">root</span><span style="left:62.11px">/</span><span style="left:65px;transform:scaleX(1.134)">ultrascan</span><span style="left:111.11px">/</span><span style="left:114px;transform:scaleX(1.104)">somo</span><span style="left:141.11px">/</span><span style="left:144px;transform:scaleX(1.016)">2AAS</span><span style="left:169.72px">_</span><span style="left:175px;transform:scaleX(1.079)">4</span><span style="left:181.34px">-</span><span style="left:185px;transform:scaleX(1.055)">A20R50hiOT</span><span style="left:246.34px">-</span><span style="left:250px;transform:scaleX(1.041)">so</span><span style="left:261.11px">.</span><span style="left:264px;transform:scaleX(1.133)">csv</span></div>
<div class="t" style="left:4px;top:110px;font-size:10px;line-height:10px;color:#000;"><span style="left:0px;transform:scaleX(1.099)">loaded</span><span style="left:33.11px">:</span><span style="left:39.11px">/</span><span style="left:42px;transform:scaleX(1.160)">root</span><span style="left:62.11px">/</span><span style="left:65px;transform:scaleX(1.134)">ultrascan</span><span style="left:111.11px">/</span><span style="left:114px;transform:scaleX(1.104)">somo</span><span style="left:141.11px">/</span><span style="left:144px;transform:scaleX(1.016)">2AAS</span><span style="left:169.72px">_</span><span style="left:175px;transform:scaleX(1.079)">3</span><span style="left:181.34px">-</span><span style="left:185px;transform:scaleX(1.055)">A20R50hiOT</span><span style="left:246.34px">-</span><span style="left:250px;transform:scaleX(1.041)">so</span><span style="left:261.11px">.</span><span style="left:264px;transform:scaleX(1.133)">csv</span></div>
<div class="t" style="left:4px;top:124px;font-size:10px;line-height:10px;color:#000;"><span style="left:0px;transform:scaleX(1.099)">loaded</span><span style="left:33.11px">:</span><span style="left:39.11px">/</span><span style="left:42px;transform:scaleX(1.160)">root</span><span style="left:62.11px">/</span><span style="left:65px;transform:scaleX(1.134)">ultrascan</span><span style="left:111.11px">/</span><span style="left:114px;transform:scaleX(1.104)">somo</span><span style="left:141.11px">/</span><span style="left:144px;transform:scaleX(1.016)">2AAS</span><span style="left:169.72px">_</span><span style="left:175px;transform:scaleX(1.079)">2</span><span style="left:181.34px">-</span><span style="left:185px;transform:scaleX(1.055)">A20R50hiOT</span><span style="left:246.34px">-</span><span style="left:250px;transform:scaleX(1.041)">so</span><span style="left:261.11px">.</span><span style="left:264px;transform:scaleX(1.133)">csv</span></div>
<div class="t" style="left:4px;top:138px;font-size:10px;line-height:10px;color:#000;"><span style="left:0px;transform:scaleX(1.099)">loaded</span><span style="left:33.11px">:</span><span style="left:39.11px">/</span><span style="left:42px;transform:scaleX(1.160)">root</span><span style="left:62.11px">/</span><span style="left:65px;transform:scaleX(1.134)">ultrascan</span><span style="left:111.11px">/</span><span style="left:114px;transform:scaleX(1.104)">somo</span><span style="left:141.11px">/</span><span style="left:144px;transform:scaleX(1.016)">2AAS</span><span style="left:169.72px">_</span><span style="left:175px;transform:scaleX(1.079)">1</span><span style="left:181.34px">-</span><span style="left:185px;transform:scaleX(1.055)">A20R50hiOT</span><span style="left:246.34px">-</span><span style="left:250px;transform:scaleX(1.041)">so</span><span style="left:261.11px">.</span><span style="left:264px;transform:scaleX(1.133)">csv</span></div>
<div class="t" style="left:4px;top:152px;font-size:10px;line-height:10px;color:#000;"><span style="left:0px;transform:scaleX(1.058)">Saved</span><span style="left:33px;transform:scaleX(1.141)">parameter</span><span style="left:88px;transform:scaleX(1.252)">file</span><span style="left:104.11px">:</span><span style="left:110.11px">/</span><span style="left:113px;transform:scaleX(1.160)">root</span><span style="left:133.11px">/</span><span style="left:136px;transform:scaleX(1.134)">ultrascan</span><span style="left:182.11px">/</span><span style="left:185px;transform:scaleX(1.104)">somo</span><span style="left:212.11px">/</span><span style="left:215px;transform:scaleX(1.014)">RNase</span><span style="left:245.72px">_</span><span style="left:251px;transform:scaleX(1.049)">A</span><span style="left:258.11px">.</span><span style="left:261px;transform:scaleX(1.112)">smp</span></div>
<div class="t" style="left:4px;top:166px;font-size:10px;line-height:10px;color:#000;"><span style="left:0px;transform:scaleX(1.079)">Loaded</span><span style="left:39px;transform:scaleX(1.141)">parameter</span><span style="left:94px;transform:scaleX(1.252)">file</span><span style="left:110.11px">:</span><span style="left:116.11px">/</span><span style="left:119px;transform:scaleX(1.160)">root</span><span style="left:139.11px">/</span><span style="left:142px;transform:scaleX(1.134)">ultrascan</span><span style="left:188.11px">/</span><span style="left:191px;transform:scaleX(1.104)">somo</span><span style="left:218.11px">/</span><span style="left:221px;transform:scaleX(1.014)">RNase</span><span style="left:251.72px">_</span><span style="left:257px;transform:scaleX(1.049)">A</span><span style="left:264.11px">.</span><span style="left:267px;transform:scaleX(1.112)">smp</span></div>
<div class="t" style="left:4px;top:180px;font-size:10px;line-height:10px;color:#000;"><span style="left:0px;transform:scaleX(1.079)">Loaded</span><span style="left:39px;transform:scaleX(1.141)">parameter</span><span style="left:94px;transform:scaleX(1.252)">file</span><span style="left:110.11px">:</span><span style="left:116.11px">/</span><span style="left:119px;transform:scaleX(1.160)">root</span><span style="left:139.11px">/</span><span style="left:142px;transform:scaleX(1.134)">ultrascan</span><span style="left:188.11px">/</span><span style="left:191px;transform:scaleX(1.104)">somo</span><span style="left:218.11px">/</span><span style="left:221px;transform:scaleX(1.014)">RNase</span><span style="left:251.72px">_</span><span style="left:257px;transform:scaleX(1.049)">A</span><span style="left:264.11px">.</span><span style="left:267px;transform:scaleX(1.112)">smp</span></div>
</div>
<div class="a " style="left:1037px;top:503px;width:16px;height:206px;background:repeating-conic-gradient(#c8c8c8 0 25%,#fff 0 50%) 0 0/2px 2px;"></div>
<div class="a " style="left:1037px;top:503px;width:16px;height:16px;background:#c8c8c8;box-shadow:inset -1px -1px 0 #000,inset 1px 1px 0 #ececec,inset -2px -2px 0 #8c8c8c,inset 2px 2px 0 #c8c8c8;"></div>
<svg class="a" style="left:1041px;top:509px" width="7" height="4" shape-rendering="crispEdges"><rect x="3" y="0" width="1" height="1"/><rect x="2" y="1" width="3" height="1"/><rect x="1" y="2" width="5" height="1"/><rect x="0" y="3" width="7" height="1"/></svg>
<div class="a " style="left:1037px;top:623px;width:16px;height:70px;background:#c8c8c8;box-shadow:inset -1px -1px 0 #000,inset 1px 1px 0 #ececec,inset -2px -2px 0 #8c8c8c,inset 2px 2px 0 #c8c8c8;"></div>
<div class="a " style="left:1037px;top:693px;width:16px;height:16px;background:#c8c8c8;box-shadow:inset -1px -1px 0 #000,inset 1px 1px 0 #ececec,inset -2px -2px 0 #8c8c8c,inset 2px 2px 0 #c8c8c8;"></div>
<svg class="a" style="left:1041px;top:699px" width="7" height="4" shape-rendering="crispEdges"><rect x="0" y="0" width="7" height="1"/><rect x="1" y="1" width="5" height="1"/><rect x="2" y="2" width="3" height="1"/><rect x="3" y="3" width="1" height="1"/></svg>
<div class="a " style="left:8px;top:659px;width:175px;height:26px;background:#00dede;box-shadow:inset -1px -1px 0 #000,inset 1px 1px 0 #fff,inset -2px -2px 0 #857773,inset 2px 2px 0 #00dede;"></div>
<div class="t" style="left:68px;top:666px;font-size:12px;line-height:12px;color:#000;"><span style="left:0px;transform:scaleX(1.110)">Select</span><span style="left:41px;transform:scaleX(1.082)">all</span></div>
<div class="a " style="left:183px;top:659px;width:174px;height:26px;background:#00dede;box-shadow:inset -1px -1px 0 #000,inset 1px 1px 0 #fff,inset -2px -2px 0 #857773,inset 2px 2px 0 #00dede;"></div>
<div class="t" style="left:246px;top:666px;font-size:12px;line-height:12px;color:#000;"><span style="left:0px;transform:scaleX(1.074)">Remove</span></div>
<div class="a " style="left:357px;top:659px;width:175px;height:26px;background:#00dede;box-shadow:inset -1px -1px 0 #000,inset 1px 1px 0 #fff,inset -2px -2px 0 #857773,inset 2px 2px 0 #00dede;"></div>
<div class="t" style="left:417px;top:666px;font-size:12px;line-height:12px;color:#000;"><span style="left:0px;transform:scaleX(1.110)">Select</span><span style="left:41px;transform:scaleX(1.049)">All</span></div>
<div class="a " style="left:532px;top:659px;width:174px;height:26px;background:#00dede;box-shadow:inset -1px -1px 0 #000,inset 1px 1px 0 #fff,inset -2px -2px 0 #857773,inset 2px 2px 0 #00dede;"></div>
<div class="t" style="left:595px;top:666px;font-size:12px;line-height:12px;color:#000;"><span style="left:0px;transform:scaleX(1.074)">Remove</span></div>
<div class="a " style="left:8px;top:685px;width:116px;height:26px;background:#00dede;box-shadow:inset -1px -1px 0 #000,inset 1px 1px 0 #fff,inset -2px -2px 0 #857773,inset 2px 2px 0 #00dede;"></div>
<div class="t" style="left:52px;top:692px;font-size:12px;line-height:12px;color:#000;"><span style="left:0px;transform:scaleX(1.085)">View</span></div>
<div class="a " style="left:124px;top:685px;width:117px;height:26px;background:#00dede;box-shadow:inset -1px -1px 0 #000,inset 1px 1px 0 #fff,inset -2px -2px 0 #857773,inset 2px 2px 0 #00dede;"></div>
<div class="t" style="left:164px;top:692px;font-size:12px;line-height:12px;color:#000;"><span style="left:0px;transform:scaleX(1.088)">Merge</span></div>
<div class="a " style="left:241px;top:685px;width:116px;height:26px;background:#00dede;box-shadow:inset -1px -1px 0 #000,inset 1px 1px 0 #fff,inset -2px -2px 0 #857773,inset 2px 2px 0 #00dede;"></div>
<div class="t" style="left:263px;top:693px;font-size:11px;line-height:11px;color:#000;"><span style="left:0px;transform:scaleX(1.089)">Set</span><span style="left:22px;transform:scaleX(1.185)">min</span><span style="left:43.47px">/</span><span style="left:47px;transform:scaleX(1.203)">max</span></div>
<div class="a " style="left:357px;top:685px;width:175px;height:26px;background:#00dede;box-shadow:inset -1px -1px 0 #000,inset 1px 1px 0 #fff,inset -2px -2px 0 #857773,inset 2px 2px 0 #00dede;"></div>
<div class="t" style="left:426px;top:692px;font-size:12px;line-height:12px;color:#000;"><span style="left:0px;transform:scaleX(1.088)">Merge</span></div>
<div class="a " style="left:532px;top:685px;width:174px;height:26px;background:#00dede;box-shadow:inset -1px -1px 0 #000,inset 1px 1px 0 #fff,inset -2px -2px 0 #857773,inset 2px 2px 0 #00dede;"></div>
<div class="t" style="left:580px;top:692px;font-size:12px;line-height:12px;color:#000;"><span style="left:0px;transform:scaleX(1.111)">Set</span><span style="left:24px;transform:scaleX(1.189)">min</span><span style="left:47.34px">/</span><span style="left:51px;transform:scaleX(1.147)">max</span></div>
<div class="a " style="left:8px;top:713px;width:524px;height:30px;background:#00dede;box-shadow:inset -1px -1px 0 #000,inset 1px 1px 0 #fff,inset -2px -2px 0 #857773,inset 2px 2px 0 #00dede;"></div>
<div class="t" style="left:256px;top:722px;font-size:12px;line-height:12px;color:#000;"><span style="left:0px;transform:scaleX(1.094)">Help</span></div>
<div class="a " style="left:532px;top:713px;width:523px;height:30px;background:#00dede;box-shadow:inset -1px -1px 0 #000,inset 1px 1px 0 #fff,inset -2px -2px 0 #857773,inset 2px 2px 0 #00dede;"></div>
<div class="t" style="left:778px;top:722px;font-size:12px;line-height:12px;color:#000;"><span style="left:0px;transform:scaleX(1.010)">Close</span></div>
</body></html>
